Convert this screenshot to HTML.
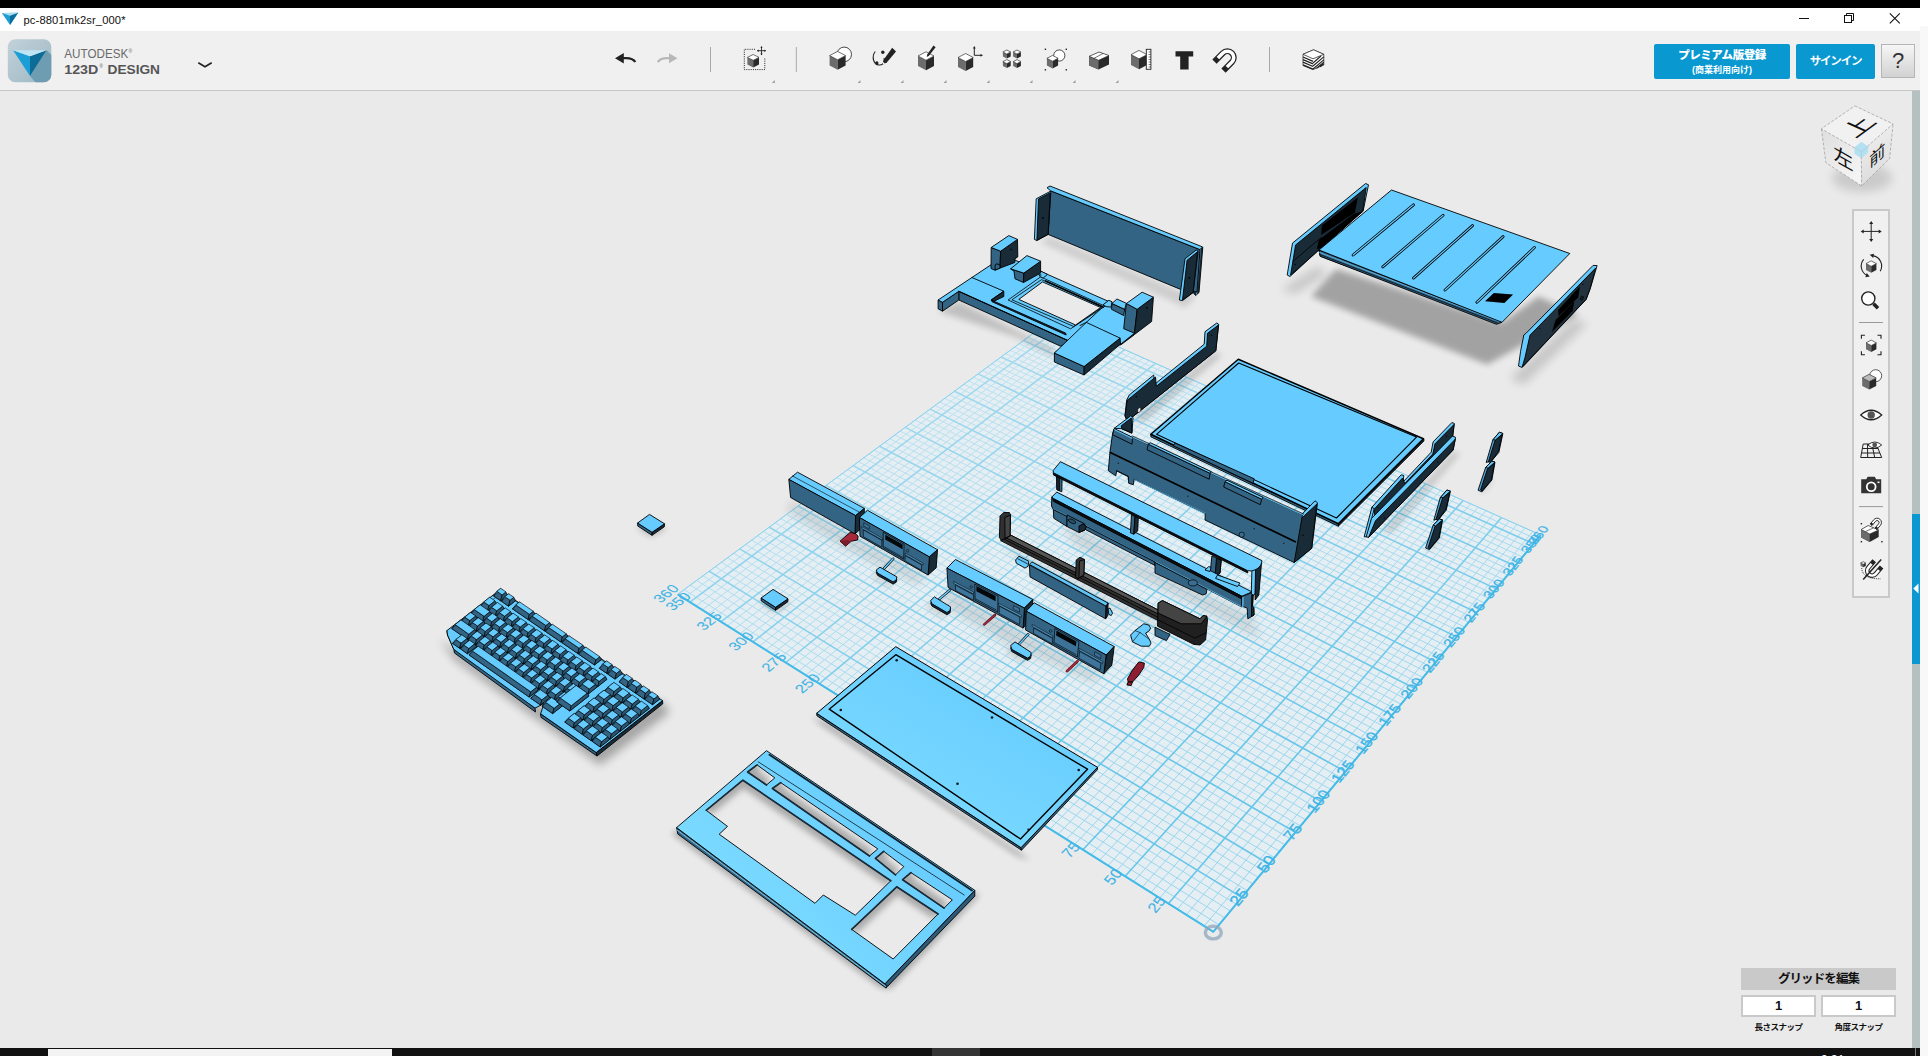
<!DOCTYPE html>
<html lang="ja"><head><meta charset="utf-8"><title>pc-8801mk2sr_000*</title>
<style>
html,body{margin:0;padding:0;overflow:hidden;}
body{width:1928px;height:1056px;overflow:hidden;position:relative;background:#eaeaea;font-family:"Liberation Sans","Noto Sans CJK JP",sans-serif;}
.abs{position:absolute;}
#topblack{left:0;top:0;width:1920px;height:8px;background:#000;}
#rstrip{left:1920px;top:0;width:8px;height:1056px;background:#f8f8f8;}
#rstrip i{display:block;height:26px;background:#fff;}
#titlebar{left:0;top:8px;width:1920px;height:23px;background:#fff;}
#title{left:23.5px;top:5.5px;font-size:11.2px;color:#111;letter-spacing:0.12px;white-space:nowrap;}
#toolbar{left:0;top:31px;width:1920px;height:59px;background:#f0f0f0;border-bottom:1px solid #c6c6c6;}
#canvas{left:0;top:91px;width:1912px;height:957px;background:#eaeaea;}
#vstrip{left:1912px;top:91px;width:8px;height:957px;background:#b5c0c0;}
#vblue{left:1912px;top:514px;width:8px;height:150px;background:#0a97d2;}
#taskbar{left:0;top:1048px;width:1920px;height:8px;background:#111;}
#search{left:48px;top:1049px;width:344px;height:7px;background:#f3f3f3;}
#tbsel{left:932px;top:1048px;width:48px;height:8px;background:#343434;}
.btn{background:#0a98d0;color:#fff;border-radius:2px;text-align:center;font-weight:bold;}
#premium{left:1654px;top:44px;width:136px;height:35px;}
#premium b{display:block;font-size:11.5px;line-height:14px;margin-top:3.5px;letter-spacing:-0.45px;}
#premium span{display:block;font-size:9px;line-height:12px;font-weight:bold;margin-top:2px;}
#signin{left:1796px;top:44px;width:79px;height:35px;font-size:11.5px;line-height:35px;letter-spacing:-1.2px;}
#help{left:1881px;top:44px;width:32px;height:32px;border:1px solid #b5b5b5;background:linear-gradient(#f6f6f6,#d2d2d2);font-size:22px;line-height:32px;text-align:center;color:#333;}
#navbar{left:1852px;top:209px;width:34px;height:385px;border:2px solid #c9c9c9;background:#f0f0f0;}
#gridedit{left:1741px;top:968px;width:155px;height:22px;background:#c9c9c9;letter-spacing:-0.9px;font-size:12.5px;font-weight:bold;line-height:22px;text-align:center;color:#111;}
.snapbox{top:995px;width:71px;height:18px;border:2px solid #c9c9c9;background:#fff;font-size:13px;font-weight:bold;line-height:18px;text-align:center;color:#111;}
.snaplbl{top:1022px;width:75px;letter-spacing:-0.5px;font-size:8.5px;font-weight:bold;text-align:center;color:#111;line-height:11px;white-space:nowrap;}
svg{position:absolute;left:0;top:0;}
</style></head><body>
<div id="canvas" class="abs"></div>
<svg id="scene" width="1928" height="1056" viewBox="0 0 1928 1056">
<defs>
<filter id="blur3" x="-20%" y="-20%" width="140%" height="140%"><feGaussianBlur stdDeviation="3"/></filter>
<filter id="blur5" x="-20%" y="-20%" width="140%" height="140%"><feGaussianBlur stdDeviation="5"/></filter>
<filter id="blur8" x="-20%" y="-20%" width="140%" height="140%"><feGaussianBlur stdDeviation="8"/></filter>
</defs>
<polygon points="1213.3,931.8 1540.7,535.0 1054.0,318.2 677.7,594.4" fill="#e5eef2"/>
<path d="M1219.1,924.8 L684.1,589.7 M1204.2,926.1 L1532.8,531.5 M1224.8,917.9 L690.4,585.1 M1195.2,920.4 L1524.9,528.0 M1230.5,911.0 L696.7,580.5 M1186.3,914.8 L1517.0,524.5 M1236.1,904.2 L703.0,575.9 M1177.4,909.2 L1509.2,521.0 M1247.3,890.7 L715.4,566.8 M1159.7,898.0 L1493.7,514.1 M1252.8,884.0 L721.5,562.3 M1151.0,892.5 L1486.0,510.6 M1258.2,877.3 L727.6,557.8 M1142.3,887.1 L1478.4,507.2 M1263.7,870.8 L733.7,553.3 M1133.7,881.6 L1470.7,503.8 M1274.4,857.7 L745.7,544.5 M1116.5,870.8 L1455.6,497.1 M1279.7,851.3 L751.7,540.1 M1108.1,865.5 L1448.1,493.7 M1285.0,844.9 L757.6,535.8 M1099.6,860.2 L1440.6,490.4 M1290.2,838.6 L763.5,531.4 M1091.3,854.9 L1433.2,487.1 M1300.6,826.0 L775.1,522.9 M1074.6,844.5 L1418.4,480.5 M1305.7,819.8 L780.9,518.6 M1066.4,839.3 L1411.0,477.2 M1310.8,813.6 L786.7,514.4 M1058.2,834.1 L1403.7,474.0 M1315.9,807.5 L792.4,510.2 M1050.1,829.0 L1396.5,470.7 M1325.9,795.4 L803.7,501.9 M1033.9,818.8 L1382.0,464.3 M1330.8,789.4 L809.3,497.8 M1026.0,813.8 L1374.8,461.1 M1335.7,783.4 L814.9,493.7 M1018.0,808.8 L1367.7,457.9 M1340.6,777.5 L820.5,489.6 M1010.1,803.8 L1360.6,454.8 M1350.3,765.8 L831.5,481.5 M994.4,793.9 L1346.5,448.5 M1355.1,760.0 L837.0,477.5 M986.7,789.0 L1339.5,445.4 M1359.8,754.2 L842.4,473.5 M978.9,784.2 L1332.5,442.2 M1364.5,748.5 L847.8,469.6 M971.2,779.3 L1325.5,439.2 M1373.8,737.2 L858.5,461.7 M956.0,769.7 L1311.7,433.0 M1378.5,731.6 L863.8,457.8 M948.5,765.0 L1304.9,430.0 M1383.1,726.1 L869.1,453.9 M941.0,760.2 L1298.1,426.9 M1387.6,720.5 L874.3,450.1 M933.5,755.5 L1291.3,423.9 M1396.6,709.6 L884.7,442.4 M918.7,746.2 L1277.8,417.9 M1401.1,704.2 L889.9,438.7 M911.3,741.6 L1271.1,414.9 M1405.5,698.8 L895.0,434.9 M904.0,737.0 L1264.4,411.9 M1409.9,693.5 L900.1,431.1 M896.8,732.4 L1257.8,409.0 M1418.7,682.9 L910.2,423.7 M882.4,723.3 L1244.6,403.1 M1423.0,677.6 L915.3,420.0 M875.2,718.8 L1238.0,400.2 M1427.3,672.4 L920.2,416.4 M868.1,714.3 L1231.5,397.3 M1431.6,667.3 L925.2,412.7 M861.0,709.9 L1225.0,394.4 M1440.0,657.0 L935.1,405.5 M847.0,701.1 L1212.1,388.6 M1444.2,652.0 L939.9,401.9 M840.1,696.7 L1205.7,385.8 M1448.4,646.9 L944.8,398.4 M833.2,692.3 L1199.3,382.9 M1452.5,641.9 L949.6,394.8 M826.3,688.0 L1192.9,380.1 M1460.7,632.0 L959.2,387.8 M812.6,679.4 L1180.3,374.5 M1464.7,627.1 L964.0,384.3 M805.9,675.1 L1174.0,371.7 M1468.7,622.2 L968.7,380.8 M799.1,670.9 L1167.8,368.9 M1472.7,617.4 L973.4,377.4 M792.4,666.7 L1161.6,366.1 M1480.7,607.8 L982.7,370.5 M779.2,658.3 L1149.2,360.6 M1484.6,603.0 L987.4,367.1 M772.6,654.2 L1143.1,357.9 M1488.5,598.3 L992.0,363.7 M766.0,650.0 L1136.9,355.1 M1492.4,593.6 L996.6,360.4 M759.5,645.9 L1130.9,352.4 M1500.1,584.2 L1005.6,353.7 M746.5,637.8 L1118.8,347.0 M1503.9,579.6 L1010.2,350.4 M740.1,633.7 L1112.7,344.4 M1507.7,575.0 L1014.6,347.1 M733.7,629.7 L1106.8,341.7 M1511.4,570.5 L1019.1,343.8 M727.4,625.7 L1100.8,339.0 M1518.9,561.5 L1028.0,337.3 M714.8,617.8 L1089.0,333.8 M1522.6,557.0 L1032.4,334.1 M708.5,613.8 L1083.1,331.1 M1526.2,552.5 L1036.7,330.9 M702.3,609.9 L1077.2,328.5 M1529.9,548.1 L1041.1,327.7 M696.1,606.0 L1071.4,325.9 M1537.1,539.3 L1049.7,321.3 M683.8,598.2 L1059.8,320.8 M1540.7,535.0 L1054.0,318.2 M677.7,594.4 L1054.0,318.2" stroke="#96d5ee" stroke-width="0.95" fill="none"/>
<path d="M1213.3,931.8 L677.7,594.4 M1213.3,931.8 L1540.7,535.0 M1241.7,897.4 L709.2,571.3 M1168.5,903.6 L1501.5,517.5 M1269.1,864.2 L739.7,548.9 M1125.1,876.2 L1463.2,500.5 M1295.4,832.3 L769.3,527.2 M1082.9,849.7 L1425.8,483.8 M1320.9,801.4 L798.1,506.0 M1042.0,823.9 L1389.2,467.5 M1345.5,771.6 L826.0,485.5 M1002.2,798.8 L1353.5,451.6 M1369.2,742.9 L853.2,465.6 M963.6,774.5 L1318.6,436.1 M1392.1,715.1 L879.5,446.3 M926.1,750.9 L1284.5,420.9 M1414.3,688.2 L905.2,427.4 M889.5,727.8 L1251.1,406.0 M1435.8,662.1 L930.1,409.1 M854.0,705.5 L1218.5,391.5 M1456.6,636.9 L954.4,391.3 M819.4,683.7 L1186.6,377.3 M1476.7,612.5 L978.1,373.9 M785.8,662.5 L1155.4,363.4 M1496.2,588.9 L1001.1,357.0 M753.0,641.8 L1124.8,349.7 M1515.2,566.0 L1023.5,340.6 M721.1,621.7 L1094.9,336.4 M1533.5,543.7 L1045.4,324.5 M689.9,602.1 L1065.6,323.3" stroke="#66c6ea" stroke-width="1.6" fill="none"/>
<linearGradient id="gfade" gradientUnits="userSpaceOnUse" x1="1213" y1="932" x2="1054" y2="318"><stop offset="0.25" stop-color="#e5eef2" stop-opacity="0"/><stop offset="1" stop-color="#e5eef2" stop-opacity="0.5"/></linearGradient>
<polygon points="1213.3,931.8 1540.7,535.0 1054.0,318.2 677.7,594.4" fill="url(#gfade)"/>
<path d="M677.7,594.4 L1054.0,318.2 L1540.7,535.0" fill="none" stroke="#8ed3ee" stroke-width="1.0"/>
<path d="M677.7,594.4 L1213.3,931.8 L1540.7,535.0" fill="none" stroke="#45bbe8" stroke-width="1.9"/><g font-family="Liberation Sans, sans-serif" font-size="13.5" fill="#3fb4e6" stroke="#3fb4e6" stroke-width="0.3"><text transform="matrix(0.744,-0.863,0.964,0.608,1160.9,912.5)" text-anchor="middle" x="4" y="-3" stroke-width="0.1">25</text>
<text transform="matrix(0.758,-0.842,0.959,0.604,1117.3,884.8)" text-anchor="middle" x="4" y="-3" stroke-width="0.1">50</text>
<text transform="matrix(0.771,-0.822,0.953,0.601,1075.1,858.0)" text-anchor="middle" x="4" y="-3" stroke-width="0.1">75</text>
<text transform="matrix(0.782,-0.803,0.948,0.597,1034.1,832.0)" text-anchor="middle" x="4" y="-3" stroke-width="0.1">100</text>
<text transform="matrix(0.793,-0.784,0.944,0.594,994.3,806.7)" text-anchor="middle" x="4" y="-3" stroke-width="0.1">125</text>
<text transform="matrix(0.803,-0.766,0.939,0.591,955.6,782.2)" text-anchor="middle" x="4" y="-3" stroke-width="0.1">150</text>
<text transform="matrix(0.812,-0.748,0.934,0.589,918.0,758.3)" text-anchor="middle" x="4" y="-3" stroke-width="0.1">175</text>
<text transform="matrix(0.821,-0.731,0.930,0.586,881.4,735.1)" text-anchor="middle" x="4" y="-3" stroke-width="0.1">200</text>
<text transform="matrix(0.829,-0.714,0.926,0.583,845.8,712.5)" text-anchor="middle" x="4" y="-3" stroke-width="0.1">225</text>
<text transform="matrix(0.837,-0.698,0.922,0.581,811.2,690.6)" text-anchor="middle" x="4" y="-3" stroke-width="0.1">250</text>
<text transform="matrix(0.844,-0.683,0.918,0.578,777.5,669.2)" text-anchor="middle" x="4" y="-3" stroke-width="0.1">275</text>
<text transform="matrix(0.850,-0.668,0.914,0.576,744.7,648.3)" text-anchor="middle" x="4" y="-3" stroke-width="0.1">300</text>
<text transform="matrix(0.856,-0.653,0.911,0.574,712.7,628.1)" text-anchor="middle" x="4" y="-3" stroke-width="0.1">325</text>
<text transform="matrix(0.861,-0.639,0.907,0.572,681.6,608.3)" text-anchor="middle" x="4" y="-3" stroke-width="0.1">350</text>
<text transform="matrix(0.863,-0.634,0.906,0.571,669.4,600.5)" text-anchor="middle" x="4" y="-3" stroke-width="0.1">360</text>
<text transform="matrix(0.769,-0.933,1.031,0.631,1242.6,897.9)" text-anchor="middle" x="-1" y="1.8">25</text>
<text transform="matrix(0.755,-0.916,1.020,0.607,1270.0,864.8)" text-anchor="middle" x="-1" y="1.8">50</text>
<text transform="matrix(0.742,-0.899,1.008,0.585,1296.3,832.8)" text-anchor="middle" x="-1" y="1.8">75</text>
<text transform="matrix(0.729,-0.883,0.997,0.563,1321.8,801.9)" text-anchor="middle" x="-1" y="1.8">100</text>
<text transform="matrix(0.716,-0.868,0.986,0.543,1346.3,772.1)" text-anchor="middle" x="-1" y="1.8">125</text>
<text transform="matrix(0.704,-0.853,0.975,0.524,1370.1,743.3)" text-anchor="middle" x="-1" y="1.8">150</text>
<text transform="matrix(0.692,-0.839,0.963,0.505,1393.0,715.5)" text-anchor="middle" x="-1" y="1.8">175</text>
<text transform="matrix(0.681,-0.825,0.952,0.488,1415.2,688.6)" text-anchor="middle" x="-1" y="1.8">200</text>
<text transform="matrix(0.670,-0.812,0.941,0.471,1436.6,662.6)" text-anchor="middle" x="-1" y="1.8">225</text>
<text transform="matrix(0.659,-0.799,0.930,0.455,1457.4,637.3)" text-anchor="middle" x="-1" y="1.8">250</text>
<text transform="matrix(0.649,-0.786,0.920,0.440,1477.5,612.9)" text-anchor="middle" x="-1" y="1.8">275</text>
<text transform="matrix(0.639,-0.774,0.909,0.426,1497.0,589.3)" text-anchor="middle" x="-1" y="1.8">300</text>
<text transform="matrix(0.629,-0.763,0.899,0.412,1516.0,566.3)" text-anchor="middle" x="-1" y="1.8">325</text>
<text transform="matrix(0.620,-0.751,0.888,0.399,1534.3,544.1)" text-anchor="middle" x="-1" y="1.8">350</text>
<text transform="matrix(0.616,-0.747,0.884,0.394,1541.5,535.4)" text-anchor="middle" x="-1" y="1.8">360</text>
<ellipse cx="1213.3" cy="932.6" rx="8" ry="6.3" fill="none" stroke="#8fa6bb" stroke-opacity="0.75" stroke-width="3.4"/></g>
<polygon points="1040.0,242.0 1050.0,237.0 1182.0,292.0 1196.0,296.0 1185.0,308.0 1170.0,300.0" fill="#000" opacity="0.12" filter="url(#blur3)"/>
<polygon points="1198.1,251.0 1202.8,247.2 1199.0,292.5 1195.6,295.6 1193.1,292.5" fill="#1a2b38" stroke="#000" stroke-width="0.9" stroke-linejoin="round" />
<polyline points="1200.4,249.4 1196.5,294.0" fill="none" stroke="#4a90bd" stroke-width="1.2" stroke-linejoin="round" stroke-linecap="round" />
<polygon points="1050.6,190.8 1200.0,249.6 1197.0,292.0 1180.6,289.4 1048.1,234.4" fill="#346484" stroke="#000" stroke-width="0.9" stroke-linejoin="round" />
<polygon points="1047.0,187.7 1050.0,186.0 1202.5,246.9 1200.0,249.6 1050.6,190.8" fill="#66ccff" stroke="#000" stroke-width="0.9" stroke-linejoin="round" />
<polygon points="1036.2,198.8 1050.0,191.5 1050.8,192.5 1048.1,234.4 1036.9,240.6 1034.4,239.4" fill="#66ccff" stroke="#000" stroke-width="0.9" stroke-linejoin="round" />
<polygon points="1038.5,199.0 1050.2,192.8 1048.1,234.4 1036.9,240.2" fill="#1a2b38" stroke="#000" stroke-width="0.9" stroke-linejoin="round" />
<circle cx="1043.1" cy="217.9" r="0.9" fill="#000"/>
<polygon points="1185.0,258.8 1196.2,250.0 1198.1,251.2 1193.1,292.5 1182.5,300.6 1179.4,300.0" fill="#66ccff" stroke="#000" stroke-width="0.9" stroke-linejoin="round" />
<polygon points="1187.1,260.2 1197.5,251.8 1193.1,292.5 1182.5,300.0" fill="#1a2b38" stroke="#000" stroke-width="0.9" stroke-linejoin="round" />
<circle cx="1189.4" cy="277.8" r="0.9" fill="#000"/>
<polygon points="937.5,311.2 958.8,301.2 1055.0,350.0 1055.0,357.0 1017.5,337.5" fill="#000" opacity="0.18" filter="url(#blur3)"/>
<polygon points="958.8,291.3 1069.7,341.3 1060.7,346.2 958.8,300.0" fill="#346484" stroke="#000" stroke-width="0.9" stroke-linejoin="round" />
<polygon points="938.1,300.0 942.5,302.2 942.5,311.2 938.1,308.8" fill="#346484" stroke="#000" stroke-width="0.9" stroke-linejoin="round" />
<polygon points="942.5,302.2 958.8,291.2 958.8,300.0 942.5,311.2" fill="#346484" stroke="#000" stroke-width="0.9" stroke-linejoin="round" />
<polygon points="1120.1,338.1 1134.0,333.6 1134.0,335.0 1120.5,345.1" fill="#1a2b38" stroke="#000" stroke-width="0.9" stroke-linejoin="round" />
<polygon points="938.1,300.0 971.9,277.5 1004.8,255.6 1047.5,274.4 1108.8,301.5 1150.9,320.1 1134.0,333.6 1121.0,344.0 1084.0,366.5 1054.4,353.0 1069.7,341.3 958.8,291.3 942.5,302.3" fill="#66ccff" stroke="#000" stroke-width="0.9" stroke-linejoin="round" />
<polygon points="1008.1,300.0 1040.6,276.9 1105.0,306.2 1070.6,328.8" fill="none" stroke="#000" stroke-width="0.8" stroke-linejoin="round" />
<polygon points="1011.9,299.8 1041.6,279.6 1102.2,306.9 1073.8,326.5" fill="none" stroke="#000" stroke-width="0.8" stroke-linejoin="round" />
<polygon points="1018.8,299.4 1042.5,281.9 1100.6,307.5 1075.6,325.0" fill="#eaeaea" stroke="#000" stroke-width="0.9" stroke-linejoin="round" />
<polyline points="1045.6,280.9 1103.1,307.1" fill="none" stroke="#000" stroke-width="1.6" stroke-linejoin="round" stroke-linecap="round" />
<polygon points="1003.8,291.2 1003.8,296.5 992.5,301.9 991.2,300.0" fill="#1a2b38" stroke="#000" stroke-width="0.9" stroke-linejoin="round" />
<polygon points="991.2,300.0 1065.6,333.1 1066.2,335.0 992.5,301.9" fill="#1a2b38" stroke="#000" stroke-width="0.9" stroke-linejoin="round" />
<polyline points="971.9,277.5 1003.8,291.2 991.2,300.0" fill="none" stroke="#000" stroke-width="0.9" stroke-linejoin="round" stroke-linecap="round" />
<polyline points="958.8,291.2 1069.4,341.2" fill="none" stroke="#000" stroke-width="0.9" stroke-linejoin="round" stroke-linecap="round" />
<polygon points="1038.5,272.5 1040.6,271.0 1047.5,274.4 1043.1,278.1 1039.8,276.5" fill="#66ccff" stroke="#000" stroke-width="0.9" stroke-linejoin="round" />
<circle cx="1040.8" cy="275.0" r="0.7" fill="#000"/>
<polygon points="991.2,247.5 1000.6,251.2 1000.0,268.1 995.0,270.2 991.0,268.5" fill="#346484" stroke="#000" stroke-width="0.9" stroke-linejoin="round" />
<polygon points="1000.6,251.2 1017.5,239.4 1017.8,256.9 1015.0,258.8 1014.8,262.5 1000.0,268.1" fill="#1a2b38" stroke="#000" stroke-width="0.9" stroke-linejoin="round" />
<polygon points="991.2,247.5 1008.8,235.6 1017.5,239.4 1000.6,251.2" fill="#66ccff" stroke="#000" stroke-width="0.9" stroke-linejoin="round" />
<polygon points="996.9,263.8 1000.0,265.0 1000.0,268.1 995.0,270.2 995.2,264.8" fill="#346484" stroke="#000" stroke-width="0.9" stroke-linejoin="round" />
<circle cx="1011.0" cy="249.6" r="0.8" fill="#000"/>
<polygon points="1010.6,268.8 1023.8,273.1 1023.5,282.5 1015.0,278.8 1014.0,271.2" fill="#346484" stroke="#000" stroke-width="0.9" stroke-linejoin="round" />
<polygon points="1023.8,273.1 1040.6,261.2 1040.6,273.1 1023.5,282.5" fill="#1a2b38" stroke="#000" stroke-width="0.9" stroke-linejoin="round" />
<polygon points="1010.6,268.8 1026.9,255.6 1040.6,261.2 1023.8,273.1" fill="#66ccff" stroke="#000" stroke-width="0.9" stroke-linejoin="round" />
<polygon points="1103.0,304.8 1108.8,300.3 1112.0,301.7 1111.1,307.1 1106.1,306.6" fill="#66ccff" stroke="#000" stroke-width="0.9" stroke-linejoin="round" />
<polygon points="1112.0,303.5 1124.6,309.3 1123.7,315.6 1111.5,309.3" fill="#346484" stroke="#000" stroke-width="0.9" stroke-linejoin="round" />
<polygon points="1112.0,303.5 1116.9,299.0 1126.4,303.3 1124.6,309.3" fill="#66ccff" stroke="#000" stroke-width="0.9" stroke-linejoin="round" />
<polygon points="1126.4,303.5 1137.2,309.3 1134.5,333.2 1123.7,328.7" fill="#346484" stroke="#000" stroke-width="0.9" stroke-linejoin="round" />
<polygon points="1137.2,309.3 1153.4,297.2 1151.6,321.5 1134.5,334.5 1134.5,333.2" fill="#1a2b38" stroke="#000" stroke-width="0.9" stroke-linejoin="round" />
<polygon points="1126.4,303.5 1142.1,292.2 1153.4,297.2 1137.2,309.3" fill="#66ccff" stroke="#000" stroke-width="0.9" stroke-linejoin="round" />
<circle cx="1146.9" cy="307.8" r="0.9" fill="#000"/>
<polygon points="1054.4,353.0 1084.1,366.5 1084.1,375.0 1054.4,362.0" fill="#346484" stroke="#000" stroke-width="0.9" stroke-linejoin="round" />
<polygon points="1084.1,366.5 1120.1,338.1 1120.5,344.0 1084.1,375.0" fill="#1a2b38" stroke="#000" stroke-width="0.9" stroke-linejoin="round" />
<polygon points="1054.4,353.0 1086.3,322.4 1120.1,338.1 1084.1,366.5" fill="#66ccff" stroke="#000" stroke-width="0.9" stroke-linejoin="round" />
<polyline points="1086.3,322.4 1101.2,308.4" fill="none" stroke="#000" stroke-width="0.9" stroke-linejoin="round" stroke-linecap="round" />
<polyline points="1086.3,322.4 1080.0,325.5" fill="none" stroke="#000" stroke-width="0.9" stroke-linejoin="round" stroke-linecap="round" />
<polygon points="1311.1,296.4 1336.1,269.1 1502.0,322.5 1538.4,296.4 1578.2,314.5 1487.3,364.5" fill="#000" opacity="0.3" filter="url(#blur3)"/>
<polygon points="1281.6,289.5 1316.8,266.8 1328.2,273.6 1294.1,294.1" fill="#000" opacity="0.15" filter="url(#blur5)"/>
<polygon points="1510.0,378.2 1573.6,319.1 1587.3,323.6 1523.6,385.0" fill="#000" opacity="0.15" filter="url(#blur5)"/>
<polygon points="1292.5,243.1 1365.6,183.5 1368.5,184.8 1363.1,211.2 1317.5,251.2 1290.0,276.5 1287.2,275.0" fill="#66ccff" stroke="#000" stroke-width="0.9" stroke-linejoin="round" />
<polygon points="1295.6,245.0 1366.2,187.5 1362.8,211.0 1290.6,275.0" fill="#1a2b38" stroke="#000" stroke-width="0.9" stroke-linejoin="round" />
<polygon points="1321.9,225.6 1357.8,197.5 1355.0,212.5 1321.2,235.0" fill="#000" stroke="none" stroke-width="0" stroke-linejoin="round" />
<polygon points="1318.8,240.0 1353.8,213.8 1362.5,211.2 1320.0,250.0 1316.9,248.8" fill="#000" stroke="none" stroke-width="0" stroke-linejoin="round" />
<polyline points="1293.1,261.2 1321.2,237.5" fill="none" stroke="#000" stroke-width="0.8" stroke-linejoin="round" stroke-linecap="round" />
<circle cx="1295.2" cy="264.4" r="0.7" fill="#000"/>
<circle cx="1356.0" cy="215.0" r="0.7" fill="#000"/>
<polygon points="1319.0,250.0 1320.2,256.2 1465.0,310.6 1467.5,305.0" fill="#346484" stroke="#000" stroke-width="0.9" stroke-linejoin="round" />
<polygon points="1319.0,250.0 1320.3,256.3 1496.5,324.3 1502.0,322.3" fill="#346484" stroke="#000" stroke-width="0.9" stroke-linejoin="round" />
<polyline points="1319.6,252.5 1499.0,321.5" fill="none" stroke="#5fb8e8" stroke-width="0.9" stroke-linejoin="round" stroke-linecap="round" />
<polyline points="1320.0,254.6 1497.5,323.0" fill="none" stroke="#000" stroke-width="0.7" stroke-linejoin="round" stroke-linecap="round" />
<polygon points="1391.5,190.0 1569.8,253.5 1502.0,322.3 1319.0,250.0" fill="#66ccff" stroke="#000" stroke-width="0.9" stroke-linejoin="round" />
<polyline points="1353.1,255.0 1413.5,204.8" fill="none" stroke="#000" stroke-width="2.8" stroke-linejoin="round" stroke-linecap="round" />
<polyline points="1353.1,255.0 1413.5,204.8" fill="none" stroke="#66ccff" stroke-width="1.2" stroke-linejoin="round" stroke-linecap="round" />
<polyline points="1382.8,266.9 1443.1,215.3" fill="none" stroke="#000" stroke-width="2.8" stroke-linejoin="round" stroke-linecap="round" />
<polyline points="1382.8,266.9 1443.1,215.3" fill="none" stroke="#66ccff" stroke-width="1.2" stroke-linejoin="round" stroke-linecap="round" />
<polyline points="1413.5,278.1 1472.5,225.6" fill="none" stroke="#000" stroke-width="2.8" stroke-linejoin="round" stroke-linecap="round" />
<polyline points="1413.5,278.1 1472.5,225.6" fill="none" stroke="#66ccff" stroke-width="1.2" stroke-linejoin="round" stroke-linecap="round" />
<polyline points="1445.0,290.0 1503.1,236.6" fill="none" stroke="#000" stroke-width="2.8" stroke-linejoin="round" stroke-linecap="round" />
<polyline points="1445.0,290.0 1503.1,236.6" fill="none" stroke="#66ccff" stroke-width="1.2" stroke-linejoin="round" stroke-linecap="round" />
<polyline points="1476.9,302.2 1534.4,247.5" fill="none" stroke="#000" stroke-width="2.8" stroke-linejoin="round" stroke-linecap="round" />
<polyline points="1476.9,302.2 1534.4,247.5" fill="none" stroke="#66ccff" stroke-width="1.2" stroke-linejoin="round" stroke-linecap="round" />
<polygon points="1485.0,301.3 1493.8,293.1 1513.1,294.4 1504.4,303.1" fill="#000" stroke="none" stroke-width="0" stroke-linejoin="round" />
<polygon points="1526.2,333.1 1593.1,265.4 1597.1,265.6 1590.2,288.8 1586.2,299.4 1522.2,367.5 1518.5,366.0 1520.6,351.2 1523.8,335.0" fill="#66ccff" stroke="#000" stroke-width="0.9" stroke-linejoin="round" />
<polygon points="1530.0,335.2 1595.6,268.1 1590.0,288.8 1586.0,299.4 1522.2,366.9 1525.0,357.5" fill="#22333f" stroke="#000" stroke-width="0.9" stroke-linejoin="round" />
<polygon points="1558.1,310.0 1580.0,286.2 1578.1,297.5 1558.5,316.2" fill="#000" stroke="none" stroke-width="0" stroke-linejoin="round" />
<polygon points="1555.6,320.0 1574.4,301.2 1572.5,311.2 1551.9,331.9" fill="#000" stroke="none" stroke-width="0" stroke-linejoin="round" />
<ellipse cx="1581.9" cy="298.1" rx="1.4" ry="2.2" fill="#121c24" stroke="#000" stroke-width="0.5" transform="rotate(25 1581.9 298.1)"/>
<circle cx="1582.8" cy="284.4" r="0.6" fill="#000"/>
<circle cx="1539.8" cy="328.5" r="0.6" fill="#000"/>
<polygon points="1133.3,418.3 1215.0,352.5 1221.7,355.0 1143.3,421.7" fill="#000" opacity="0.18" filter="url(#blur3)"/>
<polygon points="1129.2,395.0 1153.7,375.0 1154.7,384.2 1204.2,344.2 1205.0,331.7 1216.7,323.0 1218.7,324.3 1215.8,350.8 1131.7,417.5 1131.7,431.7 1125.0,415.8 1126.7,400.0" fill="#66ccff" stroke="#000" stroke-width="0.9" stroke-linejoin="round" />
<polygon points="1131.3,397.0 1155.5,377.0 1156.3,386.3 1206.7,346.2 1207.5,333.3 1218.5,325.0 1215.8,350.8 1131.7,417.5 1131.7,431.7 1125.0,415.8 1127.2,400.3" fill="#1a2b38" stroke="#000" stroke-width="0.9" stroke-linejoin="round" />
<circle cx="1136.3" cy="396.7" r="0.7" fill="#000"/>
<circle cx="1211.3" cy="335.3" r="0.7" fill="#000"/>
<ellipse cx="1139.2" cy="410.0" rx="1.5" ry="2.5" fill="#e6ecef" stroke="#000" stroke-width="0.6" transform="rotate(20 1139.2 410.0)"/>
<polygon points="1150.8,434.2 1338.3,523.7 1338.3,526.2 1150.8,436.8" fill="#346484" stroke="#000" stroke-width="0.9" stroke-linejoin="round" />
<polygon points="1338.3,523.7 1423.9,438.8 1423.9,441.0 1338.3,526.2" fill="#1a2b38" stroke="#000" stroke-width="0.9" stroke-linejoin="round" />
<polygon points="1150.8,434.2 1238.3,359.2 1423.4,438.8 1338.3,523.7" fill="#66ccff" stroke="#000" stroke-width="1.5" stroke-linejoin="round" />
<polygon points="1156.5,434.3 1238.7,363.0 1416.5,437.1 1336.5,518.0" fill="#66ccff" stroke="#000" stroke-width="1.1" stroke-linejoin="round" />
<polygon points="1175.0,443.0 1254.2,478.8 1253.0,483.3 1173.3,445.8" fill="#346484" stroke="#000" stroke-width="0.9" stroke-linejoin="round" />
<polygon points="1114.2,428.3 1130.8,415.8 1133.0,417.5 1132.0,433.3 1121.7,428.7" fill="#66ccff" stroke="#000" stroke-width="0.9" stroke-linejoin="round" />
<polygon points="1121.3,425.8 1131.3,418.0 1131.7,433.0 1121.7,428.7" fill="#1a2b38" stroke="#000" stroke-width="0.9" stroke-linejoin="round" />
<polygon points="1302.5,513.7 1315.0,500.8 1317.5,502.8 1311.7,548.3 1294.2,562.5 1294.2,516.7" fill="#66ccff" stroke="#000" stroke-width="0.9" stroke-linejoin="round" />
<polygon points="1303.7,516.3 1316.7,504.2 1311.7,548.3 1294.2,562.5 1294.7,525.0" fill="#1a2b38" stroke="#000" stroke-width="0.9" stroke-linejoin="round" />
<circle cx="1303.0" cy="535.3" r="0.7" fill="#000"/>
<polygon points="1112.5,434.2 1114.2,428.7 1132.5,437.5 1302.5,514.7 1294.2,562.5 1205.0,520.0 1205.3,513.3 1134.2,479.2 1133.3,484.7 1128.7,483.3 1128.3,476.7 1116.7,470.8 1115.8,475.8 1108.3,470.8 1110.0,451.7" fill="#346484" stroke="#000" stroke-width="0.9" stroke-linejoin="round" />
<polyline points="1132.5,437.0 1303.7,515.0" fill="none" stroke="#5db9ea" stroke-width="1.3" stroke-linejoin="round" stroke-linecap="round" />
<polyline points="1132.5,436.0 1303.7,514.0" fill="none" stroke="#000" stroke-width="0.7" stroke-linejoin="round" stroke-linecap="round" />
<polygon points="1114.2,428.7 1132.5,437.5 1132.0,444.2 1112.5,434.7" fill="#346484" stroke="#000" stroke-width="0.9" stroke-linejoin="round" />
<polyline points="1114.7,429.7 1132.0,438.3" fill="none" stroke="#5db9ea" stroke-width="1.2" stroke-linejoin="round" stroke-linecap="round" />
<polygon points="1148.3,444.2 1210.0,473.3 1209.2,479.2 1147.0,449.7" fill="#346484" stroke="#000" stroke-width="0.9" stroke-linejoin="round" />
<polygon points="1148.3,444.2 1150.3,442.7 1211.3,471.7 1210.0,473.3" fill="#66ccff" stroke="#000" stroke-width="0.9" stroke-linejoin="round" />
<polygon points="1225.0,481.7 1261.7,499.2 1260.3,504.7 1223.7,487.0" fill="#346484" stroke="#000" stroke-width="0.9" stroke-linejoin="round" />
<polygon points="1225.0,481.7 1227.0,480.2 1263.0,497.3 1261.7,499.2" fill="#66ccff" stroke="#000" stroke-width="0.9" stroke-linejoin="round" />
<polyline points="1110.3,452.5 1295.3,541.7" fill="none" stroke="#000" stroke-width="1.7" stroke-linejoin="round" stroke-linecap="round" />
<polyline points="1116.7,470.8 1128.3,476.3 1128.3,480.0" fill="none" stroke="#000" stroke-width="0.7" stroke-linejoin="round" stroke-linecap="round" />
<polyline points="1135.0,479.7 1205.3,513.0" fill="none" stroke="#4f95c2" stroke-width="1.0" stroke-linejoin="round" stroke-linecap="round" />
<circle cx="1118.3" cy="463.3" r="0.8" fill="#16242e"/>
<circle cx="1187.8" cy="496.3" r="0.8" fill="#16242e"/>
<circle cx="1254.2" cy="528.7" r="0.8" fill="#16242e"/>
<circle cx="1283.8" cy="543.3" r="0.8" fill="#16242e"/>
<circle cx="1241.7" cy="534.7" r="2.6" fill="#3a6d90" stroke="#000" stroke-width="0.7"/>
<polygon points="1381.2,532.0 1453.1,451.2 1460.0,453.8 1392.5,532.0" fill="#000" opacity="0.15" filter="url(#blur3)"/>
<polygon points="1371.9,507.2 1401.2,474.8 1403.8,475.6 1403.1,481.9 1431.2,452.2 1433.1,441.9 1451.9,422.5 1454.4,423.5 1452.5,437.5 1375.6,520.6 1370.0,520.0" fill="#66ccff" stroke="#000" stroke-width="0.9" stroke-linejoin="round" />
<polygon points="1374.0,509.4 1402.5,478.1 1404.8,483.5 1432.8,454.0 1435.0,443.8 1454.0,424.5 1452.5,437.5 1375.6,520.6" fill="#1a2b38" stroke="#000" stroke-width="0.9" stroke-linejoin="round" />
<polygon points="1371.9,507.3 1374.2,508.6 1367.0,537.0 1364.2,536.7" fill="#66ccff" stroke="#000" stroke-width="0.9" stroke-linejoin="round" />
<circle cx="1446.6" cy="436.2" r="0.6" fill="#000"/>
<circle cx="1377.9" cy="507.5" r="0.6" fill="#000"/>
<polygon points="1371.5,518.5 1373.1,516.9 1452.5,436.0 1455.6,437.3 1453.1,450.0 1368.3,537.5 1366.3,536.5" fill="#66ccff" stroke="#000" stroke-width="0.9" stroke-linejoin="round" />
<polygon points="1375.5,520.8 1455.3,439.2 1453.1,450.0 1368.6,537.4" fill="#1a2b38" stroke="#000" stroke-width="0.9" stroke-linejoin="round" />
<circle cx="1437.9" cy="462.1" r="0.6" fill="#000"/>
<circle cx="1384.4" cy="518.1" r="0.6" fill="#000"/>
<polygon points="1478.8,491.2 1482.5,493.1 1493.8,480.0 1491.9,478.8" fill="#000" opacity="0.15" filter="url(#blur3)"/>
<polygon points="1492.8,440.0 1499.4,432.2 1502.9,433.5 1498.8,452.5 1491.9,460.6 1486.2,462.5" fill="#4fa3d6" stroke="#000" stroke-width="0.9" stroke-linejoin="round" />
<polygon points="1495.0,440.6 1502.2,434.5 1498.5,451.2 1490.6,462.5 1488.4,461.9" fill="#1a2b38" stroke="#000" stroke-width="0.9" stroke-linejoin="round" />
<polygon points="1492.8,440.0 1499.4,432.2 1502.9,433.5 1495.6,439.8" fill="#66ccff" stroke="#000" stroke-width="0.9" stroke-linejoin="round" />
<polygon points="1485.6,467.5 1491.9,461.2 1495.0,462.1 1491.9,480.0 1481.9,491.9 1478.1,490.2" fill="#4fa3d6" stroke="#000" stroke-width="0.9" stroke-linejoin="round" />
<polygon points="1487.5,468.8 1494.5,463.2 1491.2,480.0 1482.2,491.0 1480.6,490.0" fill="#1a2b38" stroke="#000" stroke-width="0.9" stroke-linejoin="round" />
<polygon points="1485.6,467.5 1491.9,461.2 1495.0,462.1 1488.1,468.1" fill="#66ccff" stroke="#000" stroke-width="0.9" stroke-linejoin="round" />
<polygon points="1426.2,549.0 1430.0,550.9 1441.2,537.8 1439.4,536.5" fill="#000" opacity="0.15" filter="url(#blur3)"/>
<polygon points="1440.2,497.8 1446.9,490.0 1450.4,491.2 1446.2,510.2 1439.4,518.4 1433.8,520.2" fill="#4fa3d6" stroke="#000" stroke-width="0.9" stroke-linejoin="round" />
<polygon points="1442.5,498.4 1449.8,492.2 1446.0,509.0 1438.1,520.2 1435.9,519.6" fill="#1a2b38" stroke="#000" stroke-width="0.9" stroke-linejoin="round" />
<polygon points="1440.2,497.8 1446.9,490.0 1450.4,491.2 1443.1,497.5" fill="#66ccff" stroke="#000" stroke-width="0.9" stroke-linejoin="round" />
<polygon points="1433.1,525.2 1439.4,519.0 1442.5,519.9 1439.4,537.8 1429.4,549.6 1425.6,548.0" fill="#4fa3d6" stroke="#000" stroke-width="0.9" stroke-linejoin="round" />
<polygon points="1435.0,526.5 1442.0,521.0 1438.8,537.8 1429.8,548.8 1428.1,547.8" fill="#1a2b38" stroke="#000" stroke-width="0.9" stroke-linejoin="round" />
<polygon points="1433.1,525.2 1439.4,519.0 1442.5,519.9 1435.6,525.9" fill="#66ccff" stroke="#000" stroke-width="0.9" stroke-linejoin="round" />
<polygon points="1060.0,520.0 1250.0,615.0 1262.0,640.0 1075.0,545.0" fill="#000" opacity="0.1" filter="url(#blur5)"/>
<polygon points="1056.7,475.8 1062.1,478.6 1061.8,491.8 1056.9,489.6" fill="#346484" stroke="#000" stroke-width="0.9" stroke-linejoin="round" />
<polygon points="1056.7,475.8 1059.3,477.2 1059.3,490.7 1056.9,489.6" fill="#1a2b38" stroke="#000" stroke-width="0.9" stroke-linejoin="round" />
<polygon points="1255.6,568.5 1261.5,563.1 1258.8,595.0 1255.2,600.0 1255.0,593.8" fill="#1a2b38" stroke="#000" stroke-width="0.9" stroke-linejoin="round" />
<polygon points="1251.9,570.2 1255.6,568.2 1255.0,594.0 1251.2,596.5" fill="#66ccff" stroke="#000" stroke-width="0.9" stroke-linejoin="round" />
<polygon points="1211.9,556.0 1221.2,560.2 1220.0,573.1 1215.0,576.5 1210.0,574.0" fill="#346484" stroke="#000" stroke-width="0.9" stroke-linejoin="round" />
<polygon points="1216.5,558.1 1221.2,560.2 1220.0,573.1 1215.0,576.5" fill="#1a2b38" stroke="#000" stroke-width="0.9" stroke-linejoin="round" />
<polygon points="1056.7,492.1 1251.9,591.9 1241.9,596.3 1053.5,498.7 1051.8,497.0" fill="#66ccff" stroke="#000" stroke-width="0.9" stroke-linejoin="round" />
<polygon points="1217.5,575.0 1240.0,583.1 1237.5,586.5 1215.6,578.4" fill="#66ccff" stroke="#000" stroke-width="0.9" stroke-linejoin="round" />
<polygon points="1205.0,570.0 1208.8,566.5 1211.0,567.5 1210.0,571.5" fill="#66ccff" stroke="#000" stroke-width="0.9" stroke-linejoin="round" />
<polygon points="1053.5,498.7 1241.9,596.3 1241.9,599.0 1053.5,501.4" fill="#0a1016" stroke="#000" stroke-width="0.9" stroke-linejoin="round" />
<polygon points="1051.8,497.0 1053.5,501.4 1241.9,599.0 1241.5,606.8 1053.3,509.6 1051.5,506.0" fill="#346484" stroke="#000" stroke-width="0.9" stroke-linejoin="round" />
<polyline points="1053.5,509.2 1241.5,606.4" fill="none" stroke="#5db9ea" stroke-width="0.9" stroke-linejoin="round" stroke-linecap="round" />
<polygon points="1053.3,509.6 1053.8,518.3 1067.0,526.5 1067.0,516.5" fill="#346484" stroke="#000" stroke-width="0.9" stroke-linejoin="round" />
<polygon points="1085.4,526.0 1155.0,562.0 1155.0,565.5 1085.4,529.5" fill="#346484" stroke="#000" stroke-width="0.9" stroke-linejoin="round" />
<polygon points="1067.0,515.0 1084.0,523.5 1086.0,527.0 1085.0,530.0 1079.0,532.5 1067.0,526.5" fill="#346484" stroke="#000" stroke-width="0.9" stroke-linejoin="round" />
<polygon points="1079.0,532.5 1085.0,530.0 1086.0,527.0 1084.0,523.5 1079.0,526.0" fill="#1a2b38" stroke="#000" stroke-width="0.9" stroke-linejoin="round" />
<ellipse cx="1072" cy="521.3" rx="4" ry="1.8" fill="#2a506b" stroke="#000" stroke-width="0.7" transform="rotate(27 1072 521.3)"/>
<polygon points="1155.0,562.5 1206.9,589.4 1206.2,593.8 1202.5,595.0 1155.0,573.1" fill="#346484" stroke="#000" stroke-width="0.9" stroke-linejoin="round" />
<ellipse cx="1192.8" cy="582.9" rx="4.5" ry="3" fill="#3a6d90" stroke="#000" stroke-width="0.7"/>
<polygon points="1241.9,596.5 1250.6,593.1 1253.1,595.0 1252.5,606.2 1253.8,607.5 1254.0,615.0 1247.8,618.8 1247.2,608.1 1241.9,606.2" fill="#346484" stroke="#000" stroke-width="0.9" stroke-linejoin="round" />
<polygon points="1251.8,595.0 1253.1,595.0 1252.5,606.2 1253.8,607.5 1254.0,615.0 1251.5,616.6 1251.5,607.5" fill="#1a2b38" stroke="#000" stroke-width="0.9" stroke-linejoin="round" />
<polyline points="1243.0,597.5 1242.8,606.2" fill="none" stroke="#5db9ea" stroke-width="1.4" stroke-linejoin="round" stroke-linecap="round" />
<polygon points="1131.5,514.6 1135.0,516.7 1133.8,534.2 1130.4,532.9" fill="#346484" stroke="#000" stroke-width="0.9" stroke-linejoin="round" />
<polygon points="1135.0,516.7 1138.3,518.2 1137.7,531.0 1133.8,534.2" fill="#1a2b38" stroke="#000" stroke-width="0.9" stroke-linejoin="round" />
<polygon points="1053.3,472.7 1247.5,570.6 1247.8,573.0 1053.4,475.0" fill="#0a1016" stroke="#000" stroke-width="0.9" stroke-linejoin="round" />
<path d="M1053.3,470.4 L1060.4,461.7 L1261.9,560.6 Q1262,566 1256,569.5 Q1251,572 1247.5,570.6 L1053.3,472.7 Z" fill="#66ccff" stroke="#000" stroke-width="0.9" stroke-linejoin="round"/>
<polygon points="1030.0,577.5 1105.6,619.4 1111.2,623.8 1037.5,585.0" fill="#000" opacity="0.1" filter="url(#blur3)"/>
<polygon points="1029.4,565.0 1106.2,606.2 1105.6,618.8 1030.0,576.9" fill="#346484" stroke="#000" stroke-width="0.9" stroke-linejoin="round" />
<polygon points="1029.4,564.4 1031.9,561.9 1108.1,603.1 1106.2,606.2" fill="#66ccff" stroke="#000" stroke-width="0.9" stroke-linejoin="round" />
<polygon points="1106.2,606.2 1108.1,603.1 1107.8,615.6 1105.6,618.8" fill="#1a2b38" stroke="#000" stroke-width="0.9" stroke-linejoin="round" />
<polygon points="1015.6,560.0 1018.8,556.2 1028.8,561.2 1028.1,566.2 1025.0,568.1 1016.2,563.1" fill="#66ccff" stroke="#000" stroke-width="0.9" stroke-linejoin="round" />
<polyline points="1017.8,558.8 1027.5,563.8" fill="none" stroke="#000" stroke-width="0.7" stroke-linejoin="round" stroke-linecap="round" />
<polygon points="1108.1,608.8 1110.0,608.1 1112.5,613.1 1111.2,615.6 1108.8,614.4" fill="#66ccff" stroke="#000" stroke-width="0.9" stroke-linejoin="round" />
<polygon points="1001.2,541.2 1157.5,621.9 1162.5,632.0 1010.0,552.5" fill="#000" opacity="0.1" filter="url(#blur5)"/>
<polygon points="1155.0,627.2 1170.0,634.4 1166.5,640.6 1155.0,635.6" fill="#346484" stroke="#000" stroke-width="0.9" stroke-linejoin="round" />
<polygon points="1010.0,534.8 1159.4,610.6 1158.1,620.6 1000.6,540.6" fill="#303030" stroke="#000" stroke-width="0.9" stroke-linejoin="round" />
<polygon points="1010.0,534.8 1159.4,610.6 1159.0,614.4 1005.6,537.5" fill="#555555" stroke="#000" stroke-width="0.9" stroke-linejoin="round" />
<polyline points="1003.8,539.0 1158.5,617.5" fill="none" stroke="#000" stroke-width="0.8" stroke-linejoin="round" stroke-linecap="round" />
<polygon points="1000.0,516.2 1003.8,512.5 1009.4,512.5 1010.6,515.0 1010.0,536.2 1001.2,540.2 999.4,537.5" fill="#303030" stroke="#000" stroke-width="0.9" stroke-linejoin="round" />
<polygon points="1004.8,517.5 1010.4,515.2 1010.0,536.0 1005.0,538.1" fill="#444444" stroke="#000" stroke-width="0.9" stroke-linejoin="round" />
<polygon points="1076.2,560.0 1080.0,557.2 1084.4,559.4 1083.8,575.0 1078.1,578.8 1075.6,576.9" fill="#303030" stroke="#000" stroke-width="0.9" stroke-linejoin="round" />
<polygon points="1079.4,561.2 1084.4,559.5 1083.8,575.0 1079.0,577.8" fill="#444444" stroke="#000" stroke-width="0.9" stroke-linejoin="round" />
<polygon points="1158.1,603.1 1162.5,600.6 1200.0,618.8 1203.1,615.6 1206.9,616.2 1207.5,620.0 1205.6,640.0 1200.0,645.0 1193.8,644.4 1157.5,626.2" fill="#202020" stroke="#000" stroke-width="0.9" stroke-linejoin="round" />
<polygon points="1158.1,603.1 1162.5,600.6 1200.0,618.8 1203.1,615.6 1206.9,616.2 1201.2,623.8 1196.2,623.8 1181.2,623.8 1158.1,613.1" fill="#444444" stroke="#000" stroke-width="0.9" stroke-linejoin="round" />
<polyline points="1158.1,620.0 1195.0,638.1 1205.6,633.1" fill="none" stroke="#000" stroke-width="0.8" stroke-linejoin="round" stroke-linecap="round" />
<polygon points="791.2,498.8 855.0,535.0 927.5,576.2 917.5,585.0 842.5,547.5 787.5,512.5" fill="#000" opacity="0.1" filter="url(#blur5)"/>
<polygon points="948.8,588.8 1022.5,629.4 1103.8,675.0 1092.5,682.0 1007.5,645.0 942.5,605.0" fill="#000" opacity="0.1" filter="url(#blur5)"/>
<polygon points="840.0,541.2 850.0,532.5 855.0,533.1 858.1,536.2 857.5,540.0 851.2,541.2 845.6,546.2" fill="#a8283b" stroke="#000" stroke-width="0.9" stroke-linejoin="round" />
<polygon points="840.0,541.2 845.6,546.2 851.2,541.2 846.2,540.0" fill="#7c1c2b" stroke="none" stroke-width="0" stroke-linejoin="round" />
<polygon points="788.8,479.4 797.5,472.2 864.4,508.4 855.6,515.6" fill="#66ccff" stroke="#000" stroke-width="0.9" stroke-linejoin="round" />
<polygon points="855.6,515.6 864.4,508.4 863.8,526.5 855.0,533.8" fill="#1a2b38" stroke="#000" stroke-width="0.9" stroke-linejoin="round" />
<polygon points="788.8,479.4 855.6,515.6 855.0,533.8 790.6,497.5" fill="#346484" stroke="#000" stroke-width="0.9" stroke-linejoin="round" />
<polyline points="792.5,476.0 860.0,512.5" fill="none" stroke="#000" stroke-width="0.6" stroke-linejoin="round" stroke-linecap="round" />
<polygon points="859.4,517.5 867.5,510.3 937.5,549.7 929.4,556.9" fill="#66ccff" stroke="#000" stroke-width="0.9" stroke-linejoin="round" />
<polygon points="929.4,556.9 937.5,549.7 936.2,567.8 928.1,575.0" fill="#1a2b38" stroke="#000" stroke-width="0.9" stroke-linejoin="round" />
<polygon points="859.4,517.5 929.4,556.9 928.1,575.0 860.0,536.2" fill="#346484" stroke="#000" stroke-width="0.9" stroke-linejoin="round" />
<polygon points="861.7,526.5 882.5,538.3 882.5,540.1 861.8,528.4" fill="#4f95c2" stroke="#000" stroke-width="0.5" stroke-linejoin="round" />
<polygon points="905.3,553.0 923.2,563.2 923.1,565.0 905.2,554.9" fill="#4f95c2" stroke="#000" stroke-width="0.5" stroke-linejoin="round" />
<polygon points="863.2,529.8 881.8,540.3 881.8,547.2 863.4,536.7" fill="#3f759b" stroke="#000" stroke-width="0.6" stroke-linejoin="round" />
<polygon points="883.2,532.4 904.1,544.2 903.7,559.2 883.2,547.6" fill="#3d7298" stroke="#000" stroke-width="0.7" stroke-linejoin="round" />
<polygon points="885.3,534.7 902.7,544.5 902.6,549.3 885.2,539.5" fill="#05080a" stroke="none" stroke-width="0" stroke-linejoin="round" />
<polyline points="884.5,546.9 903.0,557.4" fill="none" stroke="#000" stroke-width="0.6" stroke-linejoin="round" stroke-linecap="round" />
<polygon points="863.7,522.7 869.2,525.8 869.3,529.2 863.7,526.0" fill="#3d7298" stroke="#000" stroke-width="0.5" stroke-linejoin="round" />
<circle cx="907.5" cy="550.7" r="1.3" fill="#3a6d90" stroke="#000" stroke-width="0.5"/>
<polygon points="905.2,555.6 921.7,564.9 921.4,570.2 905.0,560.9" fill="#3f759b" stroke="#000" stroke-width="0.6" stroke-linejoin="round" />
<polygon points="872.2,575.0 876.0,572.2 892.9,581.9 892.2,585.0 889.1,586.9 873.5,578.1" fill="#000" opacity="0.12" filter="url(#blur3)"/>
<polyline points="893.1,558.8 884.0,568.5" fill="none" stroke="#000" stroke-width="2.6" stroke-linejoin="round" stroke-linecap="round" />
<polyline points="893.1,558.8 884.0,568.5" fill="none" stroke="#66ccff" stroke-width="1.5" stroke-linejoin="round" stroke-linecap="round" />
<polygon points="876.2,572.2 880.0,569.5 896.9,579.1 896.2,582.2 893.1,584.1 877.5,575.3" fill="#1a2b38" stroke="#000" stroke-width="0.9" stroke-linejoin="round" />
<polygon points="876.2,570.0 880.0,567.2 896.9,576.9 896.2,580.0 893.1,581.9 877.5,573.1" fill="#66ccff" stroke="#000" stroke-width="0.9" stroke-linejoin="round" />
<polygon points="946.9,568.1 955.4,559.5 1032.9,599.5 1024.4,608.1" fill="#66ccff" stroke="#000" stroke-width="0.9" stroke-linejoin="round" />
<polygon points="1024.4,608.1 1032.9,599.5 1031.6,619.5 1023.1,628.1" fill="#1a2b38" stroke="#000" stroke-width="0.9" stroke-linejoin="round" />
<polygon points="946.9,568.1 1024.4,608.1 1023.1,628.1 948.1,587.5" fill="#346484" stroke="#000" stroke-width="0.9" stroke-linejoin="round" />
<polygon points="998.6,603.2 1021.6,615.3 1021.4,617.3 998.6,605.2" fill="#4f95c2" stroke="#000" stroke-width="0.5" stroke-linejoin="round" />
<polygon points="953.6,581.4 973.4,591.9 973.5,593.9 953.7,583.4" fill="#4f95c2" stroke="#000" stroke-width="0.5" stroke-linejoin="round" />
<polygon points="999.3,606.2 1019.9,617.1 1019.5,624.5 999.2,613.5" fill="#3f759b" stroke="#000" stroke-width="0.6" stroke-linejoin="round" />
<polygon points="974.8,584.1 998.0,596.1 997.7,612.3 975.1,600.2" fill="#3d7298" stroke="#000" stroke-width="0.7" stroke-linejoin="round" />
<polygon points="976.4,586.1 995.7,596.1 995.6,601.2 976.4,591.2" fill="#05080a" stroke="none" stroke-width="0" stroke-linejoin="round" />
<polyline points="996.2,609.9 975.8,599.0" fill="none" stroke="#000" stroke-width="0.6" stroke-linejoin="round" stroke-linecap="round" />
<polygon points="1013.4,605.5 1019.6,608.7 1019.4,612.3 1013.2,609.1" fill="#3d7298" stroke="#000" stroke-width="0.5" stroke-linejoin="round" />
<circle cx="971.1" cy="587.0" r="1.3" fill="#3a6d90" stroke="#000" stroke-width="0.5"/>
<polygon points="955.3,585.0 973.5,594.7 973.6,600.3 955.6,590.6" fill="#3f759b" stroke="#000" stroke-width="0.6" stroke-linejoin="round" />
<polygon points="926.6,605.6 930.4,601.9 946.6,611.9 946.0,615.6 942.9,617.5 927.9,608.8" fill="#000" opacity="0.12" filter="url(#blur3)"/>
<polyline points="950.0,590.0 938.8,599.4" fill="none" stroke="#000" stroke-width="2.6" stroke-linejoin="round" stroke-linecap="round" />
<polyline points="950.0,590.0 938.8,599.4" fill="none" stroke="#66ccff" stroke-width="1.5" stroke-linejoin="round" stroke-linecap="round" />
<polygon points="930.6,602.8 934.4,599.1 950.6,609.1 950.0,612.8 946.9,614.7 931.9,606.0" fill="#1a2b38" stroke="#000" stroke-width="0.9" stroke-linejoin="round" />
<polygon points="930.6,600.6 934.4,596.9 950.6,606.9 950.0,610.6 946.9,612.5 931.9,603.8" fill="#66ccff" stroke="#000" stroke-width="0.9" stroke-linejoin="round" />
<polyline points="995.0,615.0 984.4,624.4" fill="none" stroke="#4a0f18" stroke-width="2.6" stroke-linejoin="round" stroke-linecap="round" />
<polyline points="995.0,615.0 984.4,624.4" fill="none" stroke="#a8283b" stroke-width="1.6" stroke-linejoin="round" stroke-linecap="round" />
<polygon points="1026.2,611.2 1034.2,602.8 1114.2,646.5 1106.2,655.0" fill="#66ccff" stroke="#000" stroke-width="0.9" stroke-linejoin="round" />
<polygon points="1106.2,655.0 1114.2,646.5 1111.8,665.2 1103.8,673.8" fill="#1a2b38" stroke="#000" stroke-width="0.9" stroke-linejoin="round" />
<polygon points="1026.2,611.2 1106.2,655.0 1103.8,673.8 1025.6,630.0" fill="#346484" stroke="#000" stroke-width="0.9" stroke-linejoin="round" />
<polygon points="1079.1,648.4 1102.8,661.6 1102.6,663.4 1078.9,650.3" fill="#4f95c2" stroke="#000" stroke-width="0.5" stroke-linejoin="round" />
<polygon points="1032.2,624.5 1052.8,635.9 1052.7,637.8 1032.2,626.4" fill="#4f95c2" stroke="#000" stroke-width="0.5" stroke-linejoin="round" />
<polygon points="1079.6,651.3 1100.9,663.1 1100.0,670.1 1078.9,658.2" fill="#3f759b" stroke="#000" stroke-width="0.6" stroke-linejoin="round" />
<polygon points="1054.9,628.5 1078.9,641.6 1077.4,657.0 1053.9,643.9" fill="#3d7298" stroke="#000" stroke-width="0.7" stroke-linejoin="round" />
<polygon points="1056.5,630.5 1076.4,641.4 1075.9,646.3 1056.1,635.4" fill="#05080a" stroke="none" stroke-width="0" stroke-linejoin="round" />
<polyline points="1076.0,654.6 1054.8,642.8" fill="none" stroke="#000" stroke-width="0.6" stroke-linejoin="round" stroke-linecap="round" />
<polygon points="1094.7,651.7 1101.1,655.2 1100.7,658.6 1094.3,655.1" fill="#3d7298" stroke="#000" stroke-width="0.5" stroke-linejoin="round" />
<circle cx="1050.7" cy="631.0" r="1.3" fill="#3a6d90" stroke="#000" stroke-width="0.5"/>
<polygon points="1033.7,628.0 1052.6,638.5 1052.3,643.9 1033.5,633.4" fill="#3f759b" stroke="#000" stroke-width="0.6" stroke-linejoin="round" />
<polygon points="1006.6,650.6 1011.0,646.9 1027.2,657.5 1026.6,661.2 1023.5,663.1 1007.9,654.4" fill="#000" opacity="0.12" filter="url(#blur3)"/>
<polyline points="1028.1,634.4 1018.8,644.4" fill="none" stroke="#000" stroke-width="2.6" stroke-linejoin="round" stroke-linecap="round" />
<polyline points="1028.1,634.4 1018.8,644.4" fill="none" stroke="#66ccff" stroke-width="1.5" stroke-linejoin="round" stroke-linecap="round" />
<polygon points="1010.6,647.8 1015.0,644.1 1031.2,654.7 1030.6,658.5 1027.5,660.3 1011.9,651.6" fill="#1a2b38" stroke="#000" stroke-width="0.9" stroke-linejoin="round" />
<polygon points="1010.6,645.6 1015.0,641.9 1031.2,652.5 1030.6,656.2 1027.5,658.1 1011.9,649.4" fill="#66ccff" stroke="#000" stroke-width="0.9" stroke-linejoin="round" />
<polyline points="1077.5,661.2 1066.9,671.2" fill="none" stroke="#4a0f18" stroke-width="2.6" stroke-linejoin="round" stroke-linecap="round" />
<polyline points="1077.5,661.2 1066.9,671.2" fill="none" stroke="#a8283b" stroke-width="1.6" stroke-linejoin="round" stroke-linecap="round" />
<polygon points="1127.5,678.8 1132.5,670.0 1138.8,661.9 1144.4,663.1 1143.8,667.5 1138.8,675.0 1132.5,682.0 1128.1,682.0" fill="#8e1f30" stroke="#000" stroke-width="0.9" stroke-linejoin="round" />
<polygon points="1128.1,682.0 1132.5,682.0 1131.2,685.6 1126.9,685.0" fill="#8e1f30" stroke="#000" stroke-width="0.9" stroke-linejoin="round" />
<polygon points="1130.6,635.0 1135.0,630.6 1143.8,623.8 1148.8,625.0 1150.6,628.1 1148.8,631.2 1145.6,633.1 1149.4,639.4 1151.0,643.1 1149.4,646.2 1141.2,646.2 1132.5,641.9" fill="#66ccff" stroke="#000" stroke-width="0.9" stroke-linejoin="round" />
<polyline points="1135.0,630.6 1140.0,632.5 1149.4,639.4" fill="none" stroke="#000" stroke-width="0.6" stroke-linejoin="round" stroke-linecap="round" />
<polyline points="1140.0,632.5 1132.5,641.9" fill="none" stroke="#000" stroke-width="0.6" stroke-linejoin="round" stroke-linecap="round" />
<polygon points="440.0,640.0 455.0,660.0 600.0,765.0 670.0,712.0 660.0,700.0 600.0,745.0" fill="#000" opacity="0.3" filter="url(#blur5)"/>
<polygon points="446.9,630.6 447.5,635.0 453.8,649.4 454.5,653.0 535.5,712.0 535.0,708.1" fill="#346484" stroke="#000" stroke-width="0.9" stroke-linejoin="round" />
<polygon points="540.6,713.8 596.2,752.5 597.0,756.0 541.0,717.3" fill="#346484" stroke="#000" stroke-width="0.9" stroke-linejoin="round" />
<polygon points="596.2,752.5 662.5,700.6 662.8,703.8 597.0,756.0" fill="#1a2b38" stroke="#000" stroke-width="0.9" stroke-linejoin="round" />
<polygon points="500.0,589.8 662.5,700.6 596.2,752.5 540.6,713.8 544.0,703.5 535.0,708.1 453.8,649.4 447.5,635.0 446.9,630.6" fill="#66ccff" stroke="#000" stroke-width="0.9" stroke-linejoin="round" />
<polyline points="452.0,628.0 503.0,592.5 659.0,699.5" fill="none" stroke="#000" stroke-width="0.5" stroke-linejoin="round" stroke-linecap="round" />
<polygon points="500.5,590.5 507.6,595.3 500.6,600.8 493.6,596.0" fill="#346484" stroke="#000" stroke-width="0.65" stroke-linejoin="round" />
<polygon points="493.6,596.0 500.6,600.8 502.1,594.9 496.9,591.3" fill="#346484" stroke="#000" stroke-width="0.65" stroke-linejoin="round" />
<polygon points="507.6,595.3 500.6,600.8 502.1,594.9 505.9,591.9" fill="#2a5470" stroke="#000" stroke-width="0.65" stroke-linejoin="round" />
<polygon points="500.5,590.5 493.6,596.0 496.9,591.3 500.7,588.3" fill="#3f7aa2" stroke="#000" stroke-width="0.4" stroke-linejoin="round" />
<polygon points="500.7,588.3 505.9,591.9 502.1,594.9 496.9,591.3" fill="#66ccff" stroke="#000" stroke-width="0.65" stroke-linejoin="round" />
<polygon points="508.4,595.9 515.5,600.7 508.5,606.2 501.4,601.3" fill="#346484" stroke="#000" stroke-width="0.65" stroke-linejoin="round" />
<polygon points="501.4,601.3 508.5,606.2 510.0,600.2 504.8,596.7" fill="#346484" stroke="#000" stroke-width="0.65" stroke-linejoin="round" />
<polygon points="515.5,600.7 508.5,606.2 510.0,600.2 513.8,597.2" fill="#2a5470" stroke="#000" stroke-width="0.65" stroke-linejoin="round" />
<polygon points="508.4,595.9 501.4,601.3 504.8,596.7 508.6,593.7" fill="#3f7aa2" stroke="#000" stroke-width="0.4" stroke-linejoin="round" />
<polygon points="508.6,593.7 513.8,597.2 510.0,600.2 504.8,596.7" fill="#66ccff" stroke="#000" stroke-width="0.65" stroke-linejoin="round" />
<polygon points="519.4,603.4 535.0,614.0 528.0,619.5 512.5,608.9" fill="#346484" stroke="#000" stroke-width="0.65" stroke-linejoin="round" />
<polygon points="512.5,608.9 528.0,619.5 529.4,614.3 515.8,604.9" fill="#346484" stroke="#000" stroke-width="0.65" stroke-linejoin="round" />
<polygon points="535.0,614.0 528.0,619.5 529.4,614.3 533.3,611.2" fill="#2a5470" stroke="#000" stroke-width="0.65" stroke-linejoin="round" />
<polygon points="519.4,603.4 512.5,608.9 515.8,604.9 519.6,601.9" fill="#3f7aa2" stroke="#000" stroke-width="0.4" stroke-linejoin="round" />
<polygon points="519.6,601.9 533.3,611.2 529.4,614.3 515.8,604.9" fill="#66ccff" stroke="#000" stroke-width="0.65" stroke-linejoin="round" />
<polygon points="535.8,614.5 551.4,625.2 544.4,630.8 528.8,620.1" fill="#346484" stroke="#000" stroke-width="0.65" stroke-linejoin="round" />
<polygon points="528.8,620.1 544.4,630.8 545.9,625.5 532.1,616.1" fill="#346484" stroke="#000" stroke-width="0.65" stroke-linejoin="round" />
<polygon points="551.4,625.2 544.4,630.8 545.9,625.5 549.7,622.5" fill="#2a5470" stroke="#000" stroke-width="0.65" stroke-linejoin="round" />
<polygon points="535.8,614.5 528.8,620.1 532.1,616.1 536.0,613.1" fill="#3f7aa2" stroke="#000" stroke-width="0.4" stroke-linejoin="round" />
<polygon points="536.0,613.1 549.7,622.5 545.9,625.5 532.1,616.1" fill="#66ccff" stroke="#000" stroke-width="0.65" stroke-linejoin="round" />
<polygon points="552.2,625.8 568.0,636.5 561.0,642.1 545.2,631.3" fill="#346484" stroke="#000" stroke-width="0.65" stroke-linejoin="round" />
<polygon points="545.2,631.3 561.0,642.1 562.4,636.8 548.6,627.4" fill="#346484" stroke="#000" stroke-width="0.65" stroke-linejoin="round" />
<polygon points="568.0,636.5 561.0,642.1 562.4,636.8 566.3,633.8" fill="#2a5470" stroke="#000" stroke-width="0.65" stroke-linejoin="round" />
<polygon points="552.2,625.8 545.2,631.3 548.6,627.4 552.4,624.3" fill="#3f7aa2" stroke="#000" stroke-width="0.4" stroke-linejoin="round" />
<polygon points="552.4,624.3 566.3,633.8 562.4,636.8 548.6,627.4" fill="#66ccff" stroke="#000" stroke-width="0.65" stroke-linejoin="round" />
<polygon points="568.8,637.1 584.7,647.9 577.7,653.5 561.8,642.6" fill="#346484" stroke="#000" stroke-width="0.65" stroke-linejoin="round" />
<polygon points="561.8,642.6 577.7,653.5 579.1,648.2 565.2,638.7" fill="#346484" stroke="#000" stroke-width="0.65" stroke-linejoin="round" />
<polygon points="584.7,647.9 577.7,653.5 579.1,648.2 583.0,645.2" fill="#2a5470" stroke="#000" stroke-width="0.65" stroke-linejoin="round" />
<polygon points="568.8,637.1 561.8,642.6 565.2,638.7 569.0,635.7" fill="#3f7aa2" stroke="#000" stroke-width="0.4" stroke-linejoin="round" />
<polygon points="569.0,635.7 583.0,645.2 579.1,648.2 565.2,638.7" fill="#66ccff" stroke="#000" stroke-width="0.65" stroke-linejoin="round" />
<polygon points="585.5,648.5 601.6,659.4 594.5,665.0 578.5,654.1" fill="#346484" stroke="#000" stroke-width="0.65" stroke-linejoin="round" />
<polygon points="578.5,654.1 594.5,665.0 595.9,659.7 581.9,650.1" fill="#346484" stroke="#000" stroke-width="0.65" stroke-linejoin="round" />
<polygon points="601.6,659.4 594.5,665.0 595.9,659.7 599.8,656.7" fill="#2a5470" stroke="#000" stroke-width="0.65" stroke-linejoin="round" />
<polygon points="585.5,648.5 578.5,654.1 581.9,650.1 585.8,647.1" fill="#3f7aa2" stroke="#000" stroke-width="0.4" stroke-linejoin="round" />
<polygon points="585.8,647.1 599.8,656.7 595.9,659.7 581.9,650.1" fill="#66ccff" stroke="#000" stroke-width="0.65" stroke-linejoin="round" />
<polygon points="606.5,662.8 613.9,667.8 606.8,673.4 599.4,668.4" fill="#346484" stroke="#000" stroke-width="0.65" stroke-linejoin="round" />
<polygon points="599.4,668.4 606.8,673.4 608.2,667.6 602.8,663.9" fill="#346484" stroke="#000" stroke-width="0.65" stroke-linejoin="round" />
<polygon points="613.9,667.8 606.8,673.4 608.2,667.6 612.1,664.6" fill="#2a5470" stroke="#000" stroke-width="0.65" stroke-linejoin="round" />
<polygon points="606.5,662.8 599.4,668.4 602.8,663.9 606.7,660.9" fill="#3f7aa2" stroke="#000" stroke-width="0.4" stroke-linejoin="round" />
<polygon points="606.7,660.9 612.1,664.6 608.2,667.6 602.8,663.9" fill="#66ccff" stroke="#000" stroke-width="0.65" stroke-linejoin="round" />
<polygon points="614.7,668.4 622.2,673.5 615.0,679.1 607.6,674.0" fill="#346484" stroke="#000" stroke-width="0.65" stroke-linejoin="round" />
<polygon points="607.6,674.0 615.0,679.1 616.5,673.3 611.0,669.6" fill="#346484" stroke="#000" stroke-width="0.65" stroke-linejoin="round" />
<polygon points="622.2,673.5 615.0,679.1 616.5,673.3 620.4,670.2" fill="#2a5470" stroke="#000" stroke-width="0.65" stroke-linejoin="round" />
<polygon points="614.7,668.4 607.6,674.0 611.0,669.6 614.9,666.5" fill="#3f7aa2" stroke="#000" stroke-width="0.4" stroke-linejoin="round" />
<polygon points="614.9,666.5 620.4,670.2 616.5,673.3 611.0,669.6" fill="#66ccff" stroke="#000" stroke-width="0.65" stroke-linejoin="round" />
<polygon points="626.3,676.3 634.1,681.6 626.9,687.3 619.1,681.9" fill="#346484" stroke="#000" stroke-width="0.65" stroke-linejoin="round" />
<polygon points="619.1,681.9 626.9,687.3 628.4,681.4 622.6,677.5" fill="#346484" stroke="#000" stroke-width="0.65" stroke-linejoin="round" />
<polygon points="634.1,681.6 626.9,687.3 628.4,681.4 632.3,678.4" fill="#2a5470" stroke="#000" stroke-width="0.65" stroke-linejoin="round" />
<polygon points="626.3,676.3 619.1,681.9 622.6,677.5 626.5,674.4" fill="#3f7aa2" stroke="#000" stroke-width="0.4" stroke-linejoin="round" />
<polygon points="626.5,674.4 632.3,678.4 628.4,681.4 622.6,677.5" fill="#66ccff" stroke="#000" stroke-width="0.65" stroke-linejoin="round" />
<polygon points="634.8,682.1 642.6,687.4 635.4,693.1 627.6,687.7" fill="#346484" stroke="#000" stroke-width="0.65" stroke-linejoin="round" />
<polygon points="627.6,687.7 635.4,693.1 636.9,687.2 631.1,683.3" fill="#346484" stroke="#000" stroke-width="0.65" stroke-linejoin="round" />
<polygon points="642.6,687.4 635.4,693.1 636.9,687.2 640.8,684.2" fill="#2a5470" stroke="#000" stroke-width="0.65" stroke-linejoin="round" />
<polygon points="634.8,682.1 627.6,687.7 631.1,683.3 635.0,680.2" fill="#3f7aa2" stroke="#000" stroke-width="0.4" stroke-linejoin="round" />
<polygon points="635.0,680.2 640.8,684.2 636.9,687.2 631.1,683.3" fill="#66ccff" stroke="#000" stroke-width="0.65" stroke-linejoin="round" />
<polygon points="643.3,687.9 651.1,693.3 643.9,698.9 636.1,693.5" fill="#346484" stroke="#000" stroke-width="0.65" stroke-linejoin="round" />
<polygon points="636.1,693.5 643.9,698.9 645.4,693.1 639.6,689.1" fill="#346484" stroke="#000" stroke-width="0.65" stroke-linejoin="round" />
<polygon points="651.1,693.3 643.9,698.9 645.4,693.1 649.4,690.0" fill="#2a5470" stroke="#000" stroke-width="0.65" stroke-linejoin="round" />
<polygon points="643.3,687.9 636.1,693.5 639.6,689.1 643.5,686.0" fill="#3f7aa2" stroke="#000" stroke-width="0.4" stroke-linejoin="round" />
<polygon points="643.5,686.0 649.4,690.0 645.4,693.1 639.6,689.1" fill="#66ccff" stroke="#000" stroke-width="0.65" stroke-linejoin="round" />
<polygon points="651.8,693.7 659.7,699.1 652.5,704.7 644.6,699.3" fill="#346484" stroke="#000" stroke-width="0.65" stroke-linejoin="round" />
<polygon points="644.6,699.3 652.5,704.7 654.0,698.9 648.1,694.9" fill="#346484" stroke="#000" stroke-width="0.65" stroke-linejoin="round" />
<polygon points="659.7,699.1 652.5,704.7 654.0,698.9 657.9,695.8" fill="#2a5470" stroke="#000" stroke-width="0.65" stroke-linejoin="round" />
<polygon points="651.8,693.7 644.6,699.3 648.1,694.9 652.0,691.8" fill="#3f7aa2" stroke="#000" stroke-width="0.4" stroke-linejoin="round" />
<polygon points="652.0,691.8 657.9,695.8 654.0,698.9 648.1,694.9" fill="#66ccff" stroke="#000" stroke-width="0.65" stroke-linejoin="round" />
<polygon points="489.5,598.7 496.6,603.5 487.5,610.7 480.5,605.9" fill="#346484" stroke="#000" stroke-width="0.65" stroke-linejoin="round" />
<polygon points="480.5,605.9 487.5,610.7 489.0,605.5 483.8,601.9" fill="#346484" stroke="#000" stroke-width="0.65" stroke-linejoin="round" />
<polygon points="496.6,603.5 487.5,610.7 489.0,605.5 494.9,600.8" fill="#2a5470" stroke="#000" stroke-width="0.65" stroke-linejoin="round" />
<polygon points="489.5,598.7 480.5,605.9 483.8,601.9 489.7,597.2" fill="#3f7aa2" stroke="#000" stroke-width="0.4" stroke-linejoin="round" />
<polygon points="489.7,597.2 494.9,600.8 489.0,605.5 483.8,601.9" fill="#66ccff" stroke="#000" stroke-width="0.65" stroke-linejoin="round" />
<polygon points="497.2,604.0 504.4,608.9 495.3,616.0 488.2,611.1" fill="#346484" stroke="#000" stroke-width="0.65" stroke-linejoin="round" />
<polygon points="488.2,611.1 495.3,616.0 496.7,610.8 491.5,607.2" fill="#346484" stroke="#000" stroke-width="0.65" stroke-linejoin="round" />
<polygon points="504.4,608.9 495.3,616.0 496.7,610.8 502.7,606.1" fill="#2a5470" stroke="#000" stroke-width="0.65" stroke-linejoin="round" />
<polygon points="497.2,604.0 488.2,611.1 491.5,607.2 497.4,602.5" fill="#3f7aa2" stroke="#000" stroke-width="0.4" stroke-linejoin="round" />
<polygon points="497.4,602.5 502.7,606.1 496.7,610.8 491.5,607.2" fill="#66ccff" stroke="#000" stroke-width="0.65" stroke-linejoin="round" />
<polygon points="505.0,609.3 512.2,614.2 503.1,621.4 496.0,616.5" fill="#346484" stroke="#000" stroke-width="0.65" stroke-linejoin="round" />
<polygon points="496.0,616.5 503.1,621.4 504.6,616.2 499.3,612.6" fill="#346484" stroke="#000" stroke-width="0.65" stroke-linejoin="round" />
<polygon points="512.2,614.2 503.1,621.4 504.6,616.2 510.5,611.5" fill="#2a5470" stroke="#000" stroke-width="0.65" stroke-linejoin="round" />
<polygon points="505.0,609.3 496.0,616.5 499.3,612.6 505.2,607.9" fill="#3f7aa2" stroke="#000" stroke-width="0.4" stroke-linejoin="round" />
<polygon points="505.2,607.9 510.5,611.5 504.6,616.2 499.3,612.6" fill="#66ccff" stroke="#000" stroke-width="0.65" stroke-linejoin="round" />
<polygon points="512.9,614.7 520.1,619.6 511.0,626.8 503.8,621.9" fill="#346484" stroke="#000" stroke-width="0.65" stroke-linejoin="round" />
<polygon points="503.8,621.9 511.0,626.8 512.4,621.6 507.1,617.9" fill="#346484" stroke="#000" stroke-width="0.65" stroke-linejoin="round" />
<polygon points="520.1,619.6 511.0,626.8 512.4,621.6 518.4,616.9" fill="#2a5470" stroke="#000" stroke-width="0.65" stroke-linejoin="round" />
<polygon points="512.9,614.7 503.8,621.9 507.1,617.9 513.1,613.2" fill="#3f7aa2" stroke="#000" stroke-width="0.4" stroke-linejoin="round" />
<polygon points="513.1,613.2 518.4,616.9 512.4,621.6 507.1,617.9" fill="#66ccff" stroke="#000" stroke-width="0.65" stroke-linejoin="round" />
<polygon points="520.7,620.1 528.0,625.1 518.8,632.3 511.6,627.3" fill="#346484" stroke="#000" stroke-width="0.65" stroke-linejoin="round" />
<polygon points="511.6,627.3 518.8,632.3 520.3,627.0 515.0,623.4" fill="#346484" stroke="#000" stroke-width="0.65" stroke-linejoin="round" />
<polygon points="528.0,625.1 518.8,632.3 520.3,627.0 526.3,622.3" fill="#2a5470" stroke="#000" stroke-width="0.65" stroke-linejoin="round" />
<polygon points="520.7,620.1 511.6,627.3 515.0,623.4 520.9,618.6" fill="#3f7aa2" stroke="#000" stroke-width="0.4" stroke-linejoin="round" />
<polygon points="520.9,618.6 526.3,622.3 520.3,627.0 515.0,623.4" fill="#66ccff" stroke="#000" stroke-width="0.65" stroke-linejoin="round" />
<polygon points="528.6,625.5 535.9,630.5 526.7,637.7 519.5,632.7" fill="#346484" stroke="#000" stroke-width="0.65" stroke-linejoin="round" />
<polygon points="519.5,632.7 526.7,637.7 528.2,632.4 522.9,628.8" fill="#346484" stroke="#000" stroke-width="0.65" stroke-linejoin="round" />
<polygon points="535.9,630.5 526.7,637.7 528.2,632.4 534.2,627.7" fill="#2a5470" stroke="#000" stroke-width="0.65" stroke-linejoin="round" />
<polygon points="528.6,625.5 519.5,632.7 522.9,628.8 528.8,624.1" fill="#3f7aa2" stroke="#000" stroke-width="0.4" stroke-linejoin="round" />
<polygon points="528.8,624.1 534.2,627.7 528.2,632.4 522.9,628.8" fill="#66ccff" stroke="#000" stroke-width="0.65" stroke-linejoin="round" />
<polygon points="536.6,630.9 543.8,635.9 534.7,643.2 527.4,638.2" fill="#346484" stroke="#000" stroke-width="0.65" stroke-linejoin="round" />
<polygon points="527.4,638.2 534.7,643.2 536.1,637.9 530.8,634.2" fill="#346484" stroke="#000" stroke-width="0.65" stroke-linejoin="round" />
<polygon points="543.8,635.9 534.7,643.2 536.1,637.9 542.1,633.2" fill="#2a5470" stroke="#000" stroke-width="0.65" stroke-linejoin="round" />
<polygon points="536.6,630.9 527.4,638.2 530.8,634.2 536.8,629.5" fill="#3f7aa2" stroke="#000" stroke-width="0.4" stroke-linejoin="round" />
<polygon points="536.8,629.5 542.1,633.2 536.1,637.9 530.8,634.2" fill="#66ccff" stroke="#000" stroke-width="0.65" stroke-linejoin="round" />
<polygon points="544.5,636.4 551.8,641.4 542.6,648.6 535.3,643.6" fill="#346484" stroke="#000" stroke-width="0.65" stroke-linejoin="round" />
<polygon points="535.3,643.6 542.6,648.6 544.1,643.4 538.7,639.7" fill="#346484" stroke="#000" stroke-width="0.65" stroke-linejoin="round" />
<polygon points="551.8,641.4 542.6,648.6 544.1,643.4 550.1,638.6" fill="#2a5470" stroke="#000" stroke-width="0.65" stroke-linejoin="round" />
<polygon points="544.5,636.4 535.3,643.6 538.7,639.7 544.7,635.0" fill="#3f7aa2" stroke="#000" stroke-width="0.4" stroke-linejoin="round" />
<polygon points="544.7,635.0 550.1,638.6 544.1,643.4 538.7,639.7" fill="#66ccff" stroke="#000" stroke-width="0.65" stroke-linejoin="round" />
<polygon points="552.5,641.9 559.8,646.9 550.6,654.2 543.3,649.1" fill="#346484" stroke="#000" stroke-width="0.65" stroke-linejoin="round" />
<polygon points="543.3,649.1 550.6,654.2 552.1,648.9 546.7,645.2" fill="#346484" stroke="#000" stroke-width="0.65" stroke-linejoin="round" />
<polygon points="559.8,646.9 550.6,654.2 552.1,648.9 558.1,644.1" fill="#2a5470" stroke="#000" stroke-width="0.65" stroke-linejoin="round" />
<polygon points="552.5,641.9 543.3,649.1 546.7,645.2 552.7,640.4" fill="#3f7aa2" stroke="#000" stroke-width="0.4" stroke-linejoin="round" />
<polygon points="552.7,640.4 558.1,644.1 552.1,648.9 546.7,645.2" fill="#66ccff" stroke="#000" stroke-width="0.65" stroke-linejoin="round" />
<polygon points="560.5,647.4 567.9,652.4 558.6,659.7 551.3,654.6" fill="#346484" stroke="#000" stroke-width="0.65" stroke-linejoin="round" />
<polygon points="551.3,654.6 558.6,659.7 560.1,654.4 554.7,650.7" fill="#346484" stroke="#000" stroke-width="0.65" stroke-linejoin="round" />
<polygon points="567.9,652.4 558.6,659.7 560.1,654.4 566.1,649.6" fill="#2a5470" stroke="#000" stroke-width="0.65" stroke-linejoin="round" />
<polygon points="560.5,647.4 551.3,654.6 554.7,650.7 560.7,645.9" fill="#3f7aa2" stroke="#000" stroke-width="0.4" stroke-linejoin="round" />
<polygon points="560.7,645.9 566.1,649.6 560.1,654.4 554.7,650.7" fill="#66ccff" stroke="#000" stroke-width="0.65" stroke-linejoin="round" />
<polygon points="568.5,652.9 575.9,657.9 566.7,665.2 559.3,660.1" fill="#346484" stroke="#000" stroke-width="0.65" stroke-linejoin="round" />
<polygon points="559.3,660.1 566.7,665.2 568.1,659.9 562.7,656.2" fill="#346484" stroke="#000" stroke-width="0.65" stroke-linejoin="round" />
<polygon points="575.9,657.9 566.7,665.2 568.1,659.9 574.2,655.2" fill="#2a5470" stroke="#000" stroke-width="0.65" stroke-linejoin="round" />
<polygon points="568.5,652.9 559.3,660.1 562.7,656.2 568.8,651.4" fill="#3f7aa2" stroke="#000" stroke-width="0.4" stroke-linejoin="round" />
<polygon points="568.8,651.4 574.2,655.2 568.1,659.9 562.7,656.2" fill="#66ccff" stroke="#000" stroke-width="0.65" stroke-linejoin="round" />
<polygon points="576.6,658.4 584.0,663.5 574.7,670.8 567.4,665.7" fill="#346484" stroke="#000" stroke-width="0.65" stroke-linejoin="round" />
<polygon points="567.4,665.7 574.7,670.8 576.2,665.5 570.8,661.7" fill="#346484" stroke="#000" stroke-width="0.65" stroke-linejoin="round" />
<polygon points="584.0,663.5 574.7,670.8 576.2,665.5 582.3,660.7" fill="#2a5470" stroke="#000" stroke-width="0.65" stroke-linejoin="round" />
<polygon points="576.6,658.4 567.4,665.7 570.8,661.7 576.8,657.0" fill="#3f7aa2" stroke="#000" stroke-width="0.4" stroke-linejoin="round" />
<polygon points="576.8,657.0 582.3,660.7 576.2,665.5 570.8,661.7" fill="#66ccff" stroke="#000" stroke-width="0.65" stroke-linejoin="round" />
<polygon points="584.7,664.0 592.1,669.1 582.8,676.4 575.4,671.2" fill="#346484" stroke="#000" stroke-width="0.65" stroke-linejoin="round" />
<polygon points="575.4,671.2 582.8,676.4 584.3,671.1 578.8,667.3" fill="#346484" stroke="#000" stroke-width="0.65" stroke-linejoin="round" />
<polygon points="592.1,669.1 582.8,676.4 584.3,671.1 590.4,666.3" fill="#2a5470" stroke="#000" stroke-width="0.65" stroke-linejoin="round" />
<polygon points="584.7,664.0 575.4,671.2 578.8,667.3 584.9,662.5" fill="#3f7aa2" stroke="#000" stroke-width="0.4" stroke-linejoin="round" />
<polygon points="584.9,662.5 590.4,666.3 584.3,671.1 578.8,667.3" fill="#66ccff" stroke="#000" stroke-width="0.65" stroke-linejoin="round" />
<polygon points="592.8,669.5 600.3,674.6 591.0,682.0 583.5,676.8" fill="#346484" stroke="#000" stroke-width="0.65" stroke-linejoin="round" />
<polygon points="583.5,676.8 591.0,682.0 592.4,676.6 587.0,672.9" fill="#346484" stroke="#000" stroke-width="0.65" stroke-linejoin="round" />
<polygon points="600.3,674.6 591.0,682.0 592.4,676.6 598.5,671.9" fill="#2a5470" stroke="#000" stroke-width="0.65" stroke-linejoin="round" />
<polygon points="592.8,669.5 583.5,676.8 587.0,672.9 593.0,668.1" fill="#3f7aa2" stroke="#000" stroke-width="0.4" stroke-linejoin="round" />
<polygon points="593.0,668.1 598.5,671.9 592.4,676.6 587.0,672.9" fill="#66ccff" stroke="#000" stroke-width="0.65" stroke-linejoin="round" />
<polygon points="601.0,675.1 607.0,679.3 597.7,686.6 591.7,682.4" fill="#346484" stroke="#000" stroke-width="0.65" stroke-linejoin="round" />
<polygon points="591.7,682.4 597.7,686.6 599.2,681.3 595.1,678.5" fill="#346484" stroke="#000" stroke-width="0.65" stroke-linejoin="round" />
<polygon points="607.0,679.3 597.7,686.6 599.2,681.3 605.3,676.5" fill="#2a5470" stroke="#000" stroke-width="0.65" stroke-linejoin="round" />
<polygon points="601.0,675.1 591.7,682.4 595.1,678.5 601.2,673.7" fill="#3f7aa2" stroke="#000" stroke-width="0.4" stroke-linejoin="round" />
<polygon points="601.2,673.7 605.3,676.5 599.2,681.3 595.1,678.5" fill="#66ccff" stroke="#000" stroke-width="0.65" stroke-linejoin="round" />
<polygon points="480.0,606.3 491.7,614.4 482.6,621.5 470.9,613.4" fill="#346484" stroke="#000" stroke-width="0.65" stroke-linejoin="round" />
<polygon points="470.9,613.4 482.6,621.5 484.1,616.3 474.2,609.5" fill="#346484" stroke="#000" stroke-width="0.65" stroke-linejoin="round" />
<polygon points="491.7,614.4 482.6,621.5 484.1,616.3 490.0,611.6" fill="#2a5470" stroke="#000" stroke-width="0.65" stroke-linejoin="round" />
<polygon points="480.0,606.3 470.9,613.4 474.2,609.5 480.2,604.8" fill="#3f7aa2" stroke="#000" stroke-width="0.4" stroke-linejoin="round" />
<polygon points="480.2,604.8 490.0,611.6 484.1,616.3 474.2,609.5" fill="#66ccff" stroke="#000" stroke-width="0.65" stroke-linejoin="round" />
<polygon points="492.3,614.8 499.5,619.7 490.4,626.9 483.3,622.0" fill="#346484" stroke="#000" stroke-width="0.65" stroke-linejoin="round" />
<polygon points="483.3,622.0 490.4,626.9 491.8,621.7 486.6,618.0" fill="#346484" stroke="#000" stroke-width="0.65" stroke-linejoin="round" />
<polygon points="499.5,619.7 490.4,626.9 491.8,621.7 497.8,617.0" fill="#2a5470" stroke="#000" stroke-width="0.65" stroke-linejoin="round" />
<polygon points="492.3,614.8 483.3,622.0 486.6,618.0 492.5,613.3" fill="#3f7aa2" stroke="#000" stroke-width="0.4" stroke-linejoin="round" />
<polygon points="492.5,613.3 497.8,617.0 491.8,621.7 486.6,618.0" fill="#66ccff" stroke="#000" stroke-width="0.65" stroke-linejoin="round" />
<polygon points="500.1,620.2 507.3,625.1 498.2,632.3 491.0,627.4" fill="#346484" stroke="#000" stroke-width="0.65" stroke-linejoin="round" />
<polygon points="491.0,627.4 498.2,632.3 499.7,627.1 494.4,623.4" fill="#346484" stroke="#000" stroke-width="0.65" stroke-linejoin="round" />
<polygon points="507.3,625.1 498.2,632.3 499.7,627.1 505.6,622.4" fill="#2a5470" stroke="#000" stroke-width="0.65" stroke-linejoin="round" />
<polygon points="500.1,620.2 491.0,627.4 494.4,623.4 500.3,618.7" fill="#3f7aa2" stroke="#000" stroke-width="0.4" stroke-linejoin="round" />
<polygon points="500.3,618.7 505.6,622.4 499.7,627.1 494.4,623.4" fill="#66ccff" stroke="#000" stroke-width="0.65" stroke-linejoin="round" />
<polygon points="508.0,625.6 515.2,630.5 506.0,637.7 498.9,632.8" fill="#346484" stroke="#000" stroke-width="0.65" stroke-linejoin="round" />
<polygon points="498.9,632.8 506.0,637.7 507.5,632.5 502.2,628.8" fill="#346484" stroke="#000" stroke-width="0.65" stroke-linejoin="round" />
<polygon points="515.2,630.5 506.0,637.7 507.5,632.5 513.5,627.8" fill="#2a5470" stroke="#000" stroke-width="0.65" stroke-linejoin="round" />
<polygon points="508.0,625.6 498.9,632.8 502.2,628.8 508.2,624.1" fill="#3f7aa2" stroke="#000" stroke-width="0.4" stroke-linejoin="round" />
<polygon points="508.2,624.1 513.5,627.8 507.5,632.5 502.2,628.8" fill="#66ccff" stroke="#000" stroke-width="0.65" stroke-linejoin="round" />
<polygon points="515.8,631.0 523.1,636.0 513.9,643.2 506.7,638.2" fill="#346484" stroke="#000" stroke-width="0.65" stroke-linejoin="round" />
<polygon points="506.7,638.2 513.9,643.2 515.4,637.9 510.1,634.3" fill="#346484" stroke="#000" stroke-width="0.65" stroke-linejoin="round" />
<polygon points="523.1,636.0 513.9,643.2 515.4,637.9 521.4,633.2" fill="#2a5470" stroke="#000" stroke-width="0.65" stroke-linejoin="round" />
<polygon points="515.8,631.0 506.7,638.2 510.1,634.3 516.0,629.5" fill="#3f7aa2" stroke="#000" stroke-width="0.4" stroke-linejoin="round" />
<polygon points="516.0,629.5 521.4,633.2 515.4,637.9 510.1,634.3" fill="#66ccff" stroke="#000" stroke-width="0.65" stroke-linejoin="round" />
<polygon points="523.7,636.4 531.0,641.4 521.8,648.6 514.6,643.6" fill="#346484" stroke="#000" stroke-width="0.65" stroke-linejoin="round" />
<polygon points="514.6,643.6 521.8,648.6 523.3,643.4 517.9,639.7" fill="#346484" stroke="#000" stroke-width="0.65" stroke-linejoin="round" />
<polygon points="531.0,641.4 521.8,648.6 523.3,643.4 529.3,638.7" fill="#2a5470" stroke="#000" stroke-width="0.65" stroke-linejoin="round" />
<polygon points="523.7,636.4 514.6,643.6 517.9,639.7 523.9,635.0" fill="#3f7aa2" stroke="#000" stroke-width="0.4" stroke-linejoin="round" />
<polygon points="523.9,635.0 529.3,638.7 523.3,643.4 517.9,639.7" fill="#66ccff" stroke="#000" stroke-width="0.65" stroke-linejoin="round" />
<polygon points="531.7,641.9 538.9,646.9 529.7,654.1 522.5,649.1" fill="#346484" stroke="#000" stroke-width="0.65" stroke-linejoin="round" />
<polygon points="522.5,649.1 529.7,654.1 531.2,648.9 525.9,645.2" fill="#346484" stroke="#000" stroke-width="0.65" stroke-linejoin="round" />
<polygon points="538.9,646.9 529.7,654.1 531.2,648.9 537.2,644.1" fill="#2a5470" stroke="#000" stroke-width="0.65" stroke-linejoin="round" />
<polygon points="531.7,641.9 522.5,649.1 525.9,645.2 531.9,640.4" fill="#3f7aa2" stroke="#000" stroke-width="0.4" stroke-linejoin="round" />
<polygon points="531.9,640.4 537.2,644.1 531.2,648.9 525.9,645.2" fill="#66ccff" stroke="#000" stroke-width="0.65" stroke-linejoin="round" />
<polygon points="539.6,647.4 546.9,652.4 537.7,659.6 530.4,654.6" fill="#346484" stroke="#000" stroke-width="0.65" stroke-linejoin="round" />
<polygon points="530.4,654.6 537.7,659.6 539.2,654.4 533.8,650.7" fill="#346484" stroke="#000" stroke-width="0.65" stroke-linejoin="round" />
<polygon points="546.9,652.4 537.7,659.6 539.2,654.4 545.2,649.6" fill="#2a5470" stroke="#000" stroke-width="0.65" stroke-linejoin="round" />
<polygon points="539.6,647.4 530.4,654.6 533.8,650.7 539.8,645.9" fill="#3f7aa2" stroke="#000" stroke-width="0.4" stroke-linejoin="round" />
<polygon points="539.8,645.9 545.2,649.6 539.2,654.4 533.8,650.7" fill="#66ccff" stroke="#000" stroke-width="0.65" stroke-linejoin="round" />
<polygon points="547.6,652.9 554.9,657.9 545.7,665.2 538.4,660.1" fill="#346484" stroke="#000" stroke-width="0.65" stroke-linejoin="round" />
<polygon points="538.4,660.1 545.7,665.2 547.2,659.9 541.8,656.2" fill="#346484" stroke="#000" stroke-width="0.65" stroke-linejoin="round" />
<polygon points="554.9,657.9 545.7,665.2 547.2,659.9 553.2,655.1" fill="#2a5470" stroke="#000" stroke-width="0.65" stroke-linejoin="round" />
<polygon points="547.6,652.9 538.4,660.1 541.8,656.2 547.8,651.4" fill="#3f7aa2" stroke="#000" stroke-width="0.4" stroke-linejoin="round" />
<polygon points="547.8,651.4 553.2,655.1 547.2,659.9 541.8,656.2" fill="#66ccff" stroke="#000" stroke-width="0.65" stroke-linejoin="round" />
<polygon points="555.6,658.4 562.9,663.4 553.7,670.7 546.4,665.6" fill="#346484" stroke="#000" stroke-width="0.65" stroke-linejoin="round" />
<polygon points="546.4,665.6 553.7,670.7 555.2,665.4 549.8,661.7" fill="#346484" stroke="#000" stroke-width="0.65" stroke-linejoin="round" />
<polygon points="562.9,663.4 553.7,670.7 555.2,665.4 561.2,660.7" fill="#2a5470" stroke="#000" stroke-width="0.65" stroke-linejoin="round" />
<polygon points="555.6,658.4 546.4,665.6 549.8,661.7 555.8,656.9" fill="#3f7aa2" stroke="#000" stroke-width="0.4" stroke-linejoin="round" />
<polygon points="555.8,656.9 561.2,660.7 555.2,665.4 549.8,661.7" fill="#66ccff" stroke="#000" stroke-width="0.65" stroke-linejoin="round" />
<polygon points="563.6,663.9 571.0,669.0 561.7,676.3 554.4,671.2" fill="#346484" stroke="#000" stroke-width="0.65" stroke-linejoin="round" />
<polygon points="554.4,671.2 561.7,676.3 563.2,671.0 557.8,667.2" fill="#346484" stroke="#000" stroke-width="0.65" stroke-linejoin="round" />
<polygon points="571.0,669.0 561.7,676.3 563.2,671.0 569.3,666.2" fill="#2a5470" stroke="#000" stroke-width="0.65" stroke-linejoin="round" />
<polygon points="563.6,663.9 554.4,671.2 557.8,667.2 563.8,662.5" fill="#3f7aa2" stroke="#000" stroke-width="0.4" stroke-linejoin="round" />
<polygon points="563.8,662.5 569.3,666.2 563.2,671.0 557.8,667.2" fill="#66ccff" stroke="#000" stroke-width="0.65" stroke-linejoin="round" />
<polygon points="571.7,669.5 579.1,674.6 569.8,681.9 562.4,676.7" fill="#346484" stroke="#000" stroke-width="0.65" stroke-linejoin="round" />
<polygon points="562.4,676.7 569.8,681.9 571.3,676.6 565.8,672.8" fill="#346484" stroke="#000" stroke-width="0.65" stroke-linejoin="round" />
<polygon points="579.1,674.6 569.8,681.9 571.3,676.6 577.3,671.8" fill="#2a5470" stroke="#000" stroke-width="0.65" stroke-linejoin="round" />
<polygon points="571.7,669.5 562.4,676.7 565.8,672.8 571.9,668.0" fill="#3f7aa2" stroke="#000" stroke-width="0.4" stroke-linejoin="round" />
<polygon points="571.9,668.0 577.3,671.8 571.3,676.6 565.8,672.8" fill="#66ccff" stroke="#000" stroke-width="0.65" stroke-linejoin="round" />
<polygon points="579.8,675.0 587.2,680.2 577.9,687.5 570.5,682.3" fill="#346484" stroke="#000" stroke-width="0.65" stroke-linejoin="round" />
<polygon points="570.5,682.3 577.9,687.5 579.4,682.2 573.9,678.4" fill="#346484" stroke="#000" stroke-width="0.65" stroke-linejoin="round" />
<polygon points="587.2,680.2 577.9,687.5 579.4,682.2 585.5,677.4" fill="#2a5470" stroke="#000" stroke-width="0.65" stroke-linejoin="round" />
<polygon points="579.8,675.0 570.5,682.3 573.9,678.4 580.0,673.6" fill="#3f7aa2" stroke="#000" stroke-width="0.4" stroke-linejoin="round" />
<polygon points="580.0,673.6 585.5,677.4 579.4,682.2 573.9,678.4" fill="#66ccff" stroke="#000" stroke-width="0.65" stroke-linejoin="round" />
<polygon points="587.9,680.6 597.2,687.0 587.9,694.3 578.6,687.9" fill="#346484" stroke="#000" stroke-width="0.65" stroke-linejoin="round" />
<polygon points="578.6,687.9 587.9,694.3 589.3,689.0 582.0,684.0" fill="#346484" stroke="#000" stroke-width="0.65" stroke-linejoin="round" />
<polygon points="597.2,687.0 587.9,694.3 589.3,689.0 595.4,684.3" fill="#2a5470" stroke="#000" stroke-width="0.65" stroke-linejoin="round" />
<polygon points="587.9,680.6 578.6,687.9 582.0,684.0 588.1,679.2" fill="#3f7aa2" stroke="#000" stroke-width="0.4" stroke-linejoin="round" />
<polygon points="588.1,679.2 595.4,684.3 589.3,689.0 582.0,684.0" fill="#66ccff" stroke="#000" stroke-width="0.65" stroke-linejoin="round" />
<polygon points="470.4,613.8 477.4,618.7 468.3,625.9 461.3,621.0" fill="#346484" stroke="#000" stroke-width="0.65" stroke-linejoin="round" />
<polygon points="461.3,621.0 468.3,625.9 469.8,620.6 464.7,617.1" fill="#346484" stroke="#000" stroke-width="0.65" stroke-linejoin="round" />
<polygon points="477.4,618.7 468.3,625.9 469.8,620.6 475.7,615.9" fill="#2a5470" stroke="#000" stroke-width="0.65" stroke-linejoin="round" />
<polygon points="470.4,613.8 461.3,621.0 464.7,617.1 470.6,612.4" fill="#3f7aa2" stroke="#000" stroke-width="0.4" stroke-linejoin="round" />
<polygon points="470.6,612.4 475.7,615.9 469.8,620.6 464.7,617.1" fill="#66ccff" stroke="#000" stroke-width="0.65" stroke-linejoin="round" />
<polygon points="478.0,619.1 485.1,624.1 476.1,631.2 469.0,626.3" fill="#346484" stroke="#000" stroke-width="0.65" stroke-linejoin="round" />
<polygon points="469.0,626.3 476.1,631.2 477.5,626.0 472.3,622.4" fill="#346484" stroke="#000" stroke-width="0.65" stroke-linejoin="round" />
<polygon points="485.1,624.1 476.1,631.2 477.5,626.0 483.5,621.3" fill="#2a5470" stroke="#000" stroke-width="0.65" stroke-linejoin="round" />
<polygon points="478.0,619.1 469.0,626.3 472.3,622.4 478.2,617.7" fill="#3f7aa2" stroke="#000" stroke-width="0.4" stroke-linejoin="round" />
<polygon points="478.2,617.7 483.5,621.3 477.5,626.0 472.3,622.4" fill="#66ccff" stroke="#000" stroke-width="0.65" stroke-linejoin="round" />
<polygon points="485.8,624.5 492.9,629.5 483.9,636.6 476.7,631.7" fill="#346484" stroke="#000" stroke-width="0.65" stroke-linejoin="round" />
<polygon points="476.7,631.7 483.9,636.6 485.3,631.4 480.1,627.7" fill="#346484" stroke="#000" stroke-width="0.65" stroke-linejoin="round" />
<polygon points="492.9,629.5 483.9,636.6 485.3,631.4 491.3,626.7" fill="#2a5470" stroke="#000" stroke-width="0.65" stroke-linejoin="round" />
<polygon points="485.8,624.5 476.7,631.7 480.1,627.7 486.0,623.1" fill="#3f7aa2" stroke="#000" stroke-width="0.4" stroke-linejoin="round" />
<polygon points="486.0,623.1 491.3,626.7 485.3,631.4 480.1,627.7" fill="#66ccff" stroke="#000" stroke-width="0.65" stroke-linejoin="round" />
<polygon points="493.6,629.9 500.8,634.9 491.7,642.1 484.5,637.1" fill="#346484" stroke="#000" stroke-width="0.65" stroke-linejoin="round" />
<polygon points="484.5,637.1 491.7,642.1 493.1,636.8 487.8,633.2" fill="#346484" stroke="#000" stroke-width="0.65" stroke-linejoin="round" />
<polygon points="500.8,634.9 491.7,642.1 493.1,636.8 499.1,632.1" fill="#2a5470" stroke="#000" stroke-width="0.65" stroke-linejoin="round" />
<polygon points="493.6,629.9 484.5,637.1 487.8,633.2 493.8,628.5" fill="#3f7aa2" stroke="#000" stroke-width="0.4" stroke-linejoin="round" />
<polygon points="493.8,628.5 499.1,632.1 493.1,636.8 487.8,633.2" fill="#66ccff" stroke="#000" stroke-width="0.65" stroke-linejoin="round" />
<polygon points="501.4,635.3 508.6,640.3 499.5,647.5 492.3,642.5" fill="#346484" stroke="#000" stroke-width="0.65" stroke-linejoin="round" />
<polygon points="492.3,642.5 499.5,647.5 501.0,642.3 495.7,638.6" fill="#346484" stroke="#000" stroke-width="0.65" stroke-linejoin="round" />
<polygon points="508.6,640.3 499.5,647.5 501.0,642.3 506.9,637.5" fill="#2a5470" stroke="#000" stroke-width="0.65" stroke-linejoin="round" />
<polygon points="501.4,635.3 492.3,642.5 495.7,638.6 501.6,633.9" fill="#3f7aa2" stroke="#000" stroke-width="0.4" stroke-linejoin="round" />
<polygon points="501.6,633.9 506.9,637.5 501.0,642.3 495.7,638.6" fill="#66ccff" stroke="#000" stroke-width="0.65" stroke-linejoin="round" />
<polygon points="509.3,640.8 516.5,645.8 507.4,653.0 500.2,648.0" fill="#346484" stroke="#000" stroke-width="0.65" stroke-linejoin="round" />
<polygon points="500.2,648.0 507.4,653.0 508.8,647.7 503.5,644.0" fill="#346484" stroke="#000" stroke-width="0.65" stroke-linejoin="round" />
<polygon points="516.5,645.8 507.4,653.0 508.8,647.7 514.8,643.0" fill="#2a5470" stroke="#000" stroke-width="0.65" stroke-linejoin="round" />
<polygon points="509.3,640.8 500.2,648.0 503.5,644.0 509.5,639.3" fill="#3f7aa2" stroke="#000" stroke-width="0.4" stroke-linejoin="round" />
<polygon points="509.5,639.3 514.8,643.0 508.8,647.7 503.5,644.0" fill="#66ccff" stroke="#000" stroke-width="0.65" stroke-linejoin="round" />
<polygon points="517.2,646.2 524.4,651.2 515.3,658.5 508.0,653.4" fill="#346484" stroke="#000" stroke-width="0.65" stroke-linejoin="round" />
<polygon points="508.0,653.4 515.3,658.5 516.7,653.2 511.4,649.5" fill="#346484" stroke="#000" stroke-width="0.65" stroke-linejoin="round" />
<polygon points="524.4,651.2 515.3,658.5 516.7,653.2 522.7,648.5" fill="#2a5470" stroke="#000" stroke-width="0.65" stroke-linejoin="round" />
<polygon points="517.2,646.2 508.0,653.4 511.4,649.5 517.4,644.8" fill="#3f7aa2" stroke="#000" stroke-width="0.4" stroke-linejoin="round" />
<polygon points="517.4,644.8 522.7,648.5 516.7,653.2 511.4,649.5" fill="#66ccff" stroke="#000" stroke-width="0.65" stroke-linejoin="round" />
<polygon points="525.1,651.7 532.4,656.7 523.2,664.0 515.9,658.9" fill="#346484" stroke="#000" stroke-width="0.65" stroke-linejoin="round" />
<polygon points="515.9,658.9 523.2,664.0 524.6,658.7 519.3,655.0" fill="#346484" stroke="#000" stroke-width="0.65" stroke-linejoin="round" />
<polygon points="532.4,656.7 523.2,664.0 524.6,658.7 530.6,654.0" fill="#2a5470" stroke="#000" stroke-width="0.65" stroke-linejoin="round" />
<polygon points="525.1,651.7 515.9,658.9 519.3,655.0 525.3,650.3" fill="#3f7aa2" stroke="#000" stroke-width="0.4" stroke-linejoin="round" />
<polygon points="525.3,650.3 530.6,654.0 524.6,658.7 519.3,655.0" fill="#66ccff" stroke="#000" stroke-width="0.65" stroke-linejoin="round" />
<polygon points="533.0,657.2 540.3,662.3 531.1,669.5 523.8,664.4" fill="#346484" stroke="#000" stroke-width="0.65" stroke-linejoin="round" />
<polygon points="523.8,664.4 531.1,669.5 532.6,664.2 527.2,660.5" fill="#346484" stroke="#000" stroke-width="0.65" stroke-linejoin="round" />
<polygon points="540.3,662.3 531.1,669.5 532.6,664.2 538.6,659.5" fill="#2a5470" stroke="#000" stroke-width="0.65" stroke-linejoin="round" />
<polygon points="533.0,657.2 523.8,664.4 527.2,660.5 533.2,655.8" fill="#3f7aa2" stroke="#000" stroke-width="0.4" stroke-linejoin="round" />
<polygon points="533.2,655.8 538.6,659.5 532.6,664.2 527.2,660.5" fill="#66ccff" stroke="#000" stroke-width="0.65" stroke-linejoin="round" />
<polygon points="541.0,662.7 548.3,667.8 539.1,675.0 531.8,670.0" fill="#346484" stroke="#000" stroke-width="0.65" stroke-linejoin="round" />
<polygon points="531.8,670.0 539.1,675.0 540.6,669.8 535.2,666.0" fill="#346484" stroke="#000" stroke-width="0.65" stroke-linejoin="round" />
<polygon points="548.3,667.8 539.1,675.0 540.6,669.8 546.6,665.0" fill="#2a5470" stroke="#000" stroke-width="0.65" stroke-linejoin="round" />
<polygon points="541.0,662.7 531.8,670.0 535.2,666.0 541.2,661.3" fill="#3f7aa2" stroke="#000" stroke-width="0.4" stroke-linejoin="round" />
<polygon points="541.2,661.3 546.6,665.0 540.6,669.8 535.2,666.0" fill="#66ccff" stroke="#000" stroke-width="0.65" stroke-linejoin="round" />
<polygon points="549.0,668.3 556.3,673.3 547.1,680.6 539.8,675.5" fill="#346484" stroke="#000" stroke-width="0.65" stroke-linejoin="round" />
<polygon points="539.8,675.5 547.1,680.6 548.6,675.3 543.2,671.6" fill="#346484" stroke="#000" stroke-width="0.65" stroke-linejoin="round" />
<polygon points="556.3,673.3 547.1,680.6 548.6,675.3 554.6,670.6" fill="#2a5470" stroke="#000" stroke-width="0.65" stroke-linejoin="round" />
<polygon points="549.0,668.3 539.8,675.5 543.2,671.6 549.2,666.8" fill="#3f7aa2" stroke="#000" stroke-width="0.4" stroke-linejoin="round" />
<polygon points="549.2,666.8 554.6,670.6 548.6,675.3 543.2,671.6" fill="#66ccff" stroke="#000" stroke-width="0.65" stroke-linejoin="round" />
<polygon points="557.0,673.8 564.4,678.9 555.1,686.2 547.8,681.1" fill="#346484" stroke="#000" stroke-width="0.65" stroke-linejoin="round" />
<polygon points="547.8,681.1 555.1,686.2 556.6,680.9 551.2,677.1" fill="#346484" stroke="#000" stroke-width="0.65" stroke-linejoin="round" />
<polygon points="564.4,678.9 555.1,686.2 556.6,680.9 562.7,676.1" fill="#2a5470" stroke="#000" stroke-width="0.65" stroke-linejoin="round" />
<polygon points="557.0,673.8 547.8,681.1 551.2,677.1 557.2,672.4" fill="#3f7aa2" stroke="#000" stroke-width="0.4" stroke-linejoin="round" />
<polygon points="557.2,672.4 562.7,676.1 556.6,680.9 551.2,677.1" fill="#66ccff" stroke="#000" stroke-width="0.65" stroke-linejoin="round" />
<polygon points="565.1,679.4 572.5,684.5 563.2,691.8 555.8,686.7" fill="#346484" stroke="#000" stroke-width="0.65" stroke-linejoin="round" />
<polygon points="555.8,686.7 563.2,691.8 564.7,686.5 559.2,682.7" fill="#346484" stroke="#000" stroke-width="0.65" stroke-linejoin="round" />
<polygon points="572.5,684.5 563.2,691.8 564.7,686.5 570.7,681.7" fill="#2a5470" stroke="#000" stroke-width="0.65" stroke-linejoin="round" />
<polygon points="565.1,679.4 555.8,686.7 559.2,682.7 565.3,678.0" fill="#3f7aa2" stroke="#000" stroke-width="0.4" stroke-linejoin="round" />
<polygon points="565.3,678.0 570.7,681.7 564.7,686.5 559.2,682.7" fill="#66ccff" stroke="#000" stroke-width="0.65" stroke-linejoin="round" />
<polygon points="573.2,685.0 580.6,690.1 571.3,697.4 563.9,692.3" fill="#346484" stroke="#000" stroke-width="0.65" stroke-linejoin="round" />
<polygon points="563.9,692.3 571.3,697.4 572.8,692.1 567.3,688.3" fill="#346484" stroke="#000" stroke-width="0.65" stroke-linejoin="round" />
<polygon points="580.6,690.1 571.3,697.4 572.8,692.1 578.8,687.3" fill="#2a5470" stroke="#000" stroke-width="0.65" stroke-linejoin="round" />
<polygon points="573.2,685.0 563.9,692.3 567.3,688.3 573.4,683.6" fill="#3f7aa2" stroke="#000" stroke-width="0.4" stroke-linejoin="round" />
<polygon points="573.4,683.6 578.8,687.3 572.8,692.1 567.3,688.3" fill="#66ccff" stroke="#000" stroke-width="0.65" stroke-linejoin="round" />
<polygon points="581.3,690.6 587.3,694.8 578.0,702.1 572.0,697.9" fill="#346484" stroke="#000" stroke-width="0.65" stroke-linejoin="round" />
<polygon points="572.0,697.9 578.0,702.1 579.5,696.8 575.4,694.0" fill="#346484" stroke="#000" stroke-width="0.65" stroke-linejoin="round" />
<polygon points="587.3,694.8 578.0,702.1 579.5,696.8 585.6,692.0" fill="#2a5470" stroke="#000" stroke-width="0.65" stroke-linejoin="round" />
<polygon points="581.3,690.6 572.0,697.9 575.4,694.0 581.5,689.2" fill="#3f7aa2" stroke="#000" stroke-width="0.4" stroke-linejoin="round" />
<polygon points="581.5,689.2 585.6,692.0 579.5,696.8 575.4,694.0" fill="#66ccff" stroke="#000" stroke-width="0.65" stroke-linejoin="round" />
<polygon points="460.8,621.4 476.4,632.2 467.3,639.4 451.8,628.6" fill="#346484" stroke="#000" stroke-width="0.65" stroke-linejoin="round" />
<polygon points="451.8,628.6 467.3,639.4 468.8,634.2 455.1,624.6" fill="#346484" stroke="#000" stroke-width="0.65" stroke-linejoin="round" />
<polygon points="476.4,632.2 467.3,639.4 468.8,634.2 474.7,629.5" fill="#2a5470" stroke="#000" stroke-width="0.65" stroke-linejoin="round" />
<polygon points="460.8,621.4 451.8,628.6 455.1,624.6 461.0,619.9" fill="#3f7aa2" stroke="#000" stroke-width="0.4" stroke-linejoin="round" />
<polygon points="461.0,619.9 474.7,629.5 468.8,634.2 455.1,624.6" fill="#66ccff" stroke="#000" stroke-width="0.65" stroke-linejoin="round" />
<polygon points="477.0,632.7 484.1,637.6 475.1,644.8 467.9,639.8" fill="#346484" stroke="#000" stroke-width="0.65" stroke-linejoin="round" />
<polygon points="467.9,639.8 475.1,644.8 476.5,639.6 471.3,635.9" fill="#346484" stroke="#000" stroke-width="0.65" stroke-linejoin="round" />
<polygon points="484.1,637.6 475.1,644.8 476.5,639.6 482.5,634.9" fill="#2a5470" stroke="#000" stroke-width="0.65" stroke-linejoin="round" />
<polygon points="477.0,632.7 467.9,639.8 471.3,635.9 477.2,631.2" fill="#3f7aa2" stroke="#000" stroke-width="0.4" stroke-linejoin="round" />
<polygon points="477.2,631.2 482.5,634.9 476.5,639.6 471.3,635.9" fill="#66ccff" stroke="#000" stroke-width="0.65" stroke-linejoin="round" />
<polygon points="484.8,638.1 492.0,643.1 482.9,650.3 475.7,645.3" fill="#346484" stroke="#000" stroke-width="0.65" stroke-linejoin="round" />
<polygon points="475.7,645.3 482.9,650.3 484.3,645.0 479.1,641.3" fill="#346484" stroke="#000" stroke-width="0.65" stroke-linejoin="round" />
<polygon points="492.0,643.1 482.9,650.3 484.3,645.0 490.3,640.3" fill="#2a5470" stroke="#000" stroke-width="0.65" stroke-linejoin="round" />
<polygon points="484.8,638.1 475.7,645.3 479.1,641.3 485.0,636.6" fill="#3f7aa2" stroke="#000" stroke-width="0.4" stroke-linejoin="round" />
<polygon points="485.0,636.6 490.3,640.3 484.3,645.0 479.1,641.3" fill="#66ccff" stroke="#000" stroke-width="0.65" stroke-linejoin="round" />
<polygon points="492.6,643.5 499.8,648.5 490.7,655.7 483.5,650.7" fill="#346484" stroke="#000" stroke-width="0.65" stroke-linejoin="round" />
<polygon points="483.5,650.7 490.7,655.7 492.1,650.5 486.9,646.8" fill="#346484" stroke="#000" stroke-width="0.65" stroke-linejoin="round" />
<polygon points="499.8,648.5 490.7,655.7 492.1,650.5 498.1,645.8" fill="#2a5470" stroke="#000" stroke-width="0.65" stroke-linejoin="round" />
<polygon points="492.6,643.5 483.5,650.7 486.9,646.8 492.8,642.1" fill="#3f7aa2" stroke="#000" stroke-width="0.4" stroke-linejoin="round" />
<polygon points="492.8,642.1 498.1,645.8 492.1,650.5 486.9,646.8" fill="#66ccff" stroke="#000" stroke-width="0.65" stroke-linejoin="round" />
<polygon points="500.5,649.0 507.7,654.0 498.5,661.2 491.3,656.2" fill="#346484" stroke="#000" stroke-width="0.65" stroke-linejoin="round" />
<polygon points="491.3,656.2 498.5,661.2 500.0,655.9 494.7,652.2" fill="#346484" stroke="#000" stroke-width="0.65" stroke-linejoin="round" />
<polygon points="507.7,654.0 498.5,661.2 500.0,655.9 506.0,651.2" fill="#2a5470" stroke="#000" stroke-width="0.65" stroke-linejoin="round" />
<polygon points="500.5,649.0 491.3,656.2 494.7,652.2 500.7,647.5" fill="#3f7aa2" stroke="#000" stroke-width="0.4" stroke-linejoin="round" />
<polygon points="500.7,647.5 506.0,651.2 500.0,655.9 494.7,652.2" fill="#66ccff" stroke="#000" stroke-width="0.65" stroke-linejoin="round" />
<polygon points="508.3,654.5 515.6,659.5 506.4,666.7 499.2,661.7" fill="#346484" stroke="#000" stroke-width="0.65" stroke-linejoin="round" />
<polygon points="499.2,661.7 506.4,666.7 507.9,661.4 502.5,657.7" fill="#346484" stroke="#000" stroke-width="0.65" stroke-linejoin="round" />
<polygon points="515.6,659.5 506.4,666.7 507.9,661.4 513.8,656.7" fill="#2a5470" stroke="#000" stroke-width="0.65" stroke-linejoin="round" />
<polygon points="508.3,654.5 499.2,661.7 502.5,657.7 508.5,653.0" fill="#3f7aa2" stroke="#000" stroke-width="0.4" stroke-linejoin="round" />
<polygon points="508.5,653.0 513.8,656.7 507.9,661.4 502.5,657.7" fill="#66ccff" stroke="#000" stroke-width="0.65" stroke-linejoin="round" />
<polygon points="516.2,659.9 523.5,665.0 514.3,672.2 507.1,667.2" fill="#346484" stroke="#000" stroke-width="0.65" stroke-linejoin="round" />
<polygon points="507.1,667.2 514.3,672.2 515.8,666.9 510.4,663.2" fill="#346484" stroke="#000" stroke-width="0.65" stroke-linejoin="round" />
<polygon points="523.5,665.0 514.3,672.2 515.8,666.9 521.8,662.2" fill="#2a5470" stroke="#000" stroke-width="0.65" stroke-linejoin="round" />
<polygon points="516.2,659.9 507.1,667.2 510.4,663.2 516.4,658.5" fill="#3f7aa2" stroke="#000" stroke-width="0.4" stroke-linejoin="round" />
<polygon points="516.4,658.5 521.8,662.2 515.8,666.9 510.4,663.2" fill="#66ccff" stroke="#000" stroke-width="0.65" stroke-linejoin="round" />
<polygon points="524.1,665.5 531.4,670.5 522.2,677.8 515.0,672.7" fill="#346484" stroke="#000" stroke-width="0.65" stroke-linejoin="round" />
<polygon points="515.0,672.7 522.2,677.8 523.7,672.5 518.3,668.7" fill="#346484" stroke="#000" stroke-width="0.65" stroke-linejoin="round" />
<polygon points="531.4,670.5 522.2,677.8 523.7,672.5 529.7,667.7" fill="#2a5470" stroke="#000" stroke-width="0.65" stroke-linejoin="round" />
<polygon points="524.1,665.5 515.0,672.7 518.3,668.7 524.4,664.0" fill="#3f7aa2" stroke="#000" stroke-width="0.4" stroke-linejoin="round" />
<polygon points="524.4,664.0 529.7,667.7 523.7,672.5 518.3,668.7" fill="#66ccff" stroke="#000" stroke-width="0.65" stroke-linejoin="round" />
<polygon points="532.1,671.0 539.4,676.1 530.2,683.3 522.9,678.2" fill="#346484" stroke="#000" stroke-width="0.65" stroke-linejoin="round" />
<polygon points="522.9,678.2 530.2,683.3 531.7,678.0 526.3,674.3" fill="#346484" stroke="#000" stroke-width="0.65" stroke-linejoin="round" />
<polygon points="539.4,676.1 530.2,683.3 531.7,678.0 537.7,673.3" fill="#2a5470" stroke="#000" stroke-width="0.65" stroke-linejoin="round" />
<polygon points="532.1,671.0 522.9,678.2 526.3,674.3 532.3,669.5" fill="#3f7aa2" stroke="#000" stroke-width="0.4" stroke-linejoin="round" />
<polygon points="532.3,669.5 537.7,673.3 531.7,678.0 526.3,674.3" fill="#66ccff" stroke="#000" stroke-width="0.65" stroke-linejoin="round" />
<polygon points="540.1,676.5 547.4,681.6 538.2,688.9 530.9,683.8" fill="#346484" stroke="#000" stroke-width="0.65" stroke-linejoin="round" />
<polygon points="530.9,683.8 538.2,688.9 539.6,683.6 534.3,679.8" fill="#346484" stroke="#000" stroke-width="0.65" stroke-linejoin="round" />
<polygon points="547.4,681.6 538.2,688.9 539.6,683.6 545.7,678.9" fill="#2a5470" stroke="#000" stroke-width="0.65" stroke-linejoin="round" />
<polygon points="540.1,676.5 530.9,683.8 534.3,679.8 540.3,675.1" fill="#3f7aa2" stroke="#000" stroke-width="0.4" stroke-linejoin="round" />
<polygon points="540.3,675.1 545.7,678.9 539.6,683.6 534.3,679.8" fill="#66ccff" stroke="#000" stroke-width="0.65" stroke-linejoin="round" />
<polygon points="548.1,682.1 555.4,687.2 546.2,694.5 538.9,689.4" fill="#346484" stroke="#000" stroke-width="0.65" stroke-linejoin="round" />
<polygon points="538.9,689.4 546.2,694.5 547.7,689.2 542.3,685.4" fill="#346484" stroke="#000" stroke-width="0.65" stroke-linejoin="round" />
<polygon points="555.4,687.2 546.2,694.5 547.7,689.2 553.7,684.4" fill="#2a5470" stroke="#000" stroke-width="0.65" stroke-linejoin="round" />
<polygon points="548.1,682.1 538.9,689.4 542.3,685.4 548.3,680.7" fill="#3f7aa2" stroke="#000" stroke-width="0.4" stroke-linejoin="round" />
<polygon points="548.3,680.7 553.7,684.4 547.7,689.2 542.3,685.4" fill="#66ccff" stroke="#000" stroke-width="0.65" stroke-linejoin="round" />
<polygon points="556.1,687.7 563.5,692.8 554.2,700.1 546.9,695.0" fill="#346484" stroke="#000" stroke-width="0.65" stroke-linejoin="round" />
<polygon points="546.9,695.0 554.2,700.1 555.7,694.8 550.3,691.0" fill="#346484" stroke="#000" stroke-width="0.65" stroke-linejoin="round" />
<polygon points="563.5,692.8 554.2,700.1 555.7,694.8 561.8,690.0" fill="#2a5470" stroke="#000" stroke-width="0.65" stroke-linejoin="round" />
<polygon points="556.1,687.7 546.9,695.0 550.3,691.0 556.3,686.3" fill="#3f7aa2" stroke="#000" stroke-width="0.4" stroke-linejoin="round" />
<polygon points="556.3,686.3 561.8,690.0 555.7,694.8 550.3,691.0" fill="#66ccff" stroke="#000" stroke-width="0.65" stroke-linejoin="round" />
<polygon points="564.2,693.3 571.6,698.5 562.3,705.8 554.9,700.6" fill="#346484" stroke="#000" stroke-width="0.65" stroke-linejoin="round" />
<polygon points="554.9,700.6 562.3,705.8 563.8,700.4 558.3,696.6" fill="#346484" stroke="#000" stroke-width="0.65" stroke-linejoin="round" />
<polygon points="571.6,698.5 562.3,705.8 563.8,700.4 569.9,695.7" fill="#2a5470" stroke="#000" stroke-width="0.65" stroke-linejoin="round" />
<polygon points="564.2,693.3 554.9,700.6 558.3,696.6 564.4,691.9" fill="#3f7aa2" stroke="#000" stroke-width="0.4" stroke-linejoin="round" />
<polygon points="564.4,691.9 569.9,695.7 563.8,700.4 558.3,696.6" fill="#66ccff" stroke="#000" stroke-width="0.65" stroke-linejoin="round" />
<polygon points="461.6,636.2 468.7,641.1 459.6,648.3 452.6,643.4" fill="#346484" stroke="#000" stroke-width="0.65" stroke-linejoin="round" />
<polygon points="452.6,643.4 459.6,648.3 461.0,643.1 455.9,639.5" fill="#346484" stroke="#000" stroke-width="0.65" stroke-linejoin="round" />
<polygon points="468.7,641.1 459.6,648.3 461.0,643.1 467.0,638.4" fill="#2a5470" stroke="#000" stroke-width="0.65" stroke-linejoin="round" />
<polygon points="461.6,636.2 452.6,643.4 455.9,639.5 461.8,634.8" fill="#3f7aa2" stroke="#000" stroke-width="0.4" stroke-linejoin="round" />
<polygon points="461.8,634.8 467.0,638.4 461.0,643.1 455.9,639.5" fill="#66ccff" stroke="#000" stroke-width="0.65" stroke-linejoin="round" />
<polygon points="469.4,641.7 476.5,646.6 467.4,653.8 460.4,648.8" fill="#346484" stroke="#000" stroke-width="0.65" stroke-linejoin="round" />
<polygon points="460.4,648.8 467.4,653.8 468.8,648.5 463.7,644.9" fill="#346484" stroke="#000" stroke-width="0.65" stroke-linejoin="round" />
<polygon points="476.5,646.6 467.4,653.8 468.8,648.5 474.8,643.8" fill="#2a5470" stroke="#000" stroke-width="0.65" stroke-linejoin="round" />
<polygon points="469.4,641.7 460.4,648.8 463.7,644.9 469.6,640.2" fill="#3f7aa2" stroke="#000" stroke-width="0.4" stroke-linejoin="round" />
<polygon points="469.6,640.2 474.8,643.8 468.8,648.5 463.7,644.9" fill="#66ccff" stroke="#000" stroke-width="0.65" stroke-linejoin="round" />
<polygon points="478.0,647.7 538.4,689.9 529.2,697.1 469.0,654.9" fill="#346484" stroke="#000" stroke-width="0.65" stroke-linejoin="round" />
<polygon points="469.0,654.9 529.2,697.1 530.7,691.8 472.3,650.9" fill="#346484" stroke="#000" stroke-width="0.65" stroke-linejoin="round" />
<polygon points="538.4,689.9 529.2,697.1 530.7,691.8 536.7,687.1" fill="#2a5470" stroke="#000" stroke-width="0.65" stroke-linejoin="round" />
<polygon points="478.0,647.7 469.0,654.9 472.3,650.9 478.2,646.2" fill="#3f7aa2" stroke="#000" stroke-width="0.4" stroke-linejoin="round" />
<polygon points="478.2,646.2 536.7,687.1 530.7,691.8 472.3,650.9" fill="#66ccff" stroke="#000" stroke-width="0.65" stroke-linejoin="round" />
<polygon points="540.0,691.0 549.7,697.8 540.5,705.0 530.8,698.3" fill="#346484" stroke="#000" stroke-width="0.65" stroke-linejoin="round" />
<polygon points="530.8,698.3 540.5,705.0 541.9,699.8 534.2,694.3" fill="#346484" stroke="#000" stroke-width="0.65" stroke-linejoin="round" />
<polygon points="549.7,697.8 540.5,705.0 541.9,699.8 548.0,695.0" fill="#2a5470" stroke="#000" stroke-width="0.65" stroke-linejoin="round" />
<polygon points="540.0,691.0 530.8,698.3 534.2,694.3 540.2,689.6" fill="#3f7aa2" stroke="#000" stroke-width="0.4" stroke-linejoin="round" />
<polygon points="540.2,689.6 548.0,695.0 541.9,699.8 534.2,694.3" fill="#66ccff" stroke="#000" stroke-width="0.65" stroke-linejoin="round" />
<polygon points="551.3,698.9 561.9,706.3 552.6,713.6 542.1,706.2" fill="#346484" stroke="#000" stroke-width="0.65" stroke-linejoin="round" />
<polygon points="542.1,706.2 552.6,713.6 554.1,708.3 545.5,702.2" fill="#346484" stroke="#000" stroke-width="0.65" stroke-linejoin="round" />
<polygon points="561.9,706.3 552.6,713.6 554.1,708.3 560.2,703.5" fill="#2a5470" stroke="#000" stroke-width="0.65" stroke-linejoin="round" />
<polygon points="551.3,698.9 542.1,706.2 545.5,702.2 551.6,697.5" fill="#3f7aa2" stroke="#000" stroke-width="0.4" stroke-linejoin="round" />
<polygon points="551.6,697.5 560.2,703.5 554.1,708.3 545.5,702.2" fill="#66ccff" stroke="#000" stroke-width="0.65" stroke-linejoin="round" />
<polygon points="575.9,686.9 589.0,695.9 569.8,711.0 556.8,701.9" fill="#346484" stroke="#000" stroke-width="0.65" stroke-linejoin="round" />
<polygon points="556.8,701.9 569.8,711.0 571.3,705.7 560.2,697.9" fill="#346484" stroke="#000" stroke-width="0.65" stroke-linejoin="round" />
<polygon points="589.0,695.9 569.8,711.0 571.3,705.7 587.2,693.1" fill="#2a5470" stroke="#000" stroke-width="0.65" stroke-linejoin="round" />
<polygon points="575.9,686.9 556.8,701.9 560.2,697.9 576.1,685.4" fill="#3f7aa2" stroke="#000" stroke-width="0.4" stroke-linejoin="round" />
<polygon points="576.1,685.4 587.2,693.1 571.3,705.7 560.2,697.9" fill="#66ccff" stroke="#000" stroke-width="0.65" stroke-linejoin="round" />
<polygon points="613.6,683.8 621.9,689.5 612.6,696.8 604.3,691.1" fill="#346484" stroke="#000" stroke-width="0.65" stroke-linejoin="round" />
<polygon points="604.3,691.1 612.6,696.8 614.0,691.5 607.8,687.2" fill="#346484" stroke="#000" stroke-width="0.65" stroke-linejoin="round" />
<polygon points="621.9,689.5 612.6,696.8 614.0,691.5 620.2,686.7" fill="#2a5470" stroke="#000" stroke-width="0.65" stroke-linejoin="round" />
<polygon points="613.6,683.8 604.3,691.1 607.8,687.2 613.9,682.4" fill="#3f7aa2" stroke="#000" stroke-width="0.4" stroke-linejoin="round" />
<polygon points="613.9,682.4 620.2,686.7 614.0,691.5 607.8,687.2" fill="#66ccff" stroke="#000" stroke-width="0.65" stroke-linejoin="round" />
<polygon points="622.8,690.0 631.1,695.7 621.7,703.1 613.4,697.4" fill="#346484" stroke="#000" stroke-width="0.65" stroke-linejoin="round" />
<polygon points="613.4,697.4 621.7,703.1 623.2,697.8 616.9,693.4" fill="#346484" stroke="#000" stroke-width="0.65" stroke-linejoin="round" />
<polygon points="631.1,695.7 621.7,703.1 623.2,697.8 629.3,693.0" fill="#2a5470" stroke="#000" stroke-width="0.65" stroke-linejoin="round" />
<polygon points="622.8,690.0 613.4,697.4 616.9,693.4 623.0,688.6" fill="#3f7aa2" stroke="#000" stroke-width="0.4" stroke-linejoin="round" />
<polygon points="623.0,688.6 629.3,693.0 623.2,697.8 616.9,693.4" fill="#66ccff" stroke="#000" stroke-width="0.65" stroke-linejoin="round" />
<polygon points="631.9,696.3 640.2,702.0 630.8,709.4 622.5,703.7" fill="#346484" stroke="#000" stroke-width="0.65" stroke-linejoin="round" />
<polygon points="622.5,703.7 630.8,709.4 632.3,704.1 626.0,699.7" fill="#346484" stroke="#000" stroke-width="0.65" stroke-linejoin="round" />
<polygon points="640.2,702.0 630.8,709.4 632.3,704.1 638.5,699.3" fill="#2a5470" stroke="#000" stroke-width="0.65" stroke-linejoin="round" />
<polygon points="631.9,696.3 622.5,703.7 626.0,699.7 632.1,694.9" fill="#3f7aa2" stroke="#000" stroke-width="0.4" stroke-linejoin="round" />
<polygon points="632.1,694.9 638.5,699.3 632.3,704.1 626.0,699.7" fill="#66ccff" stroke="#000" stroke-width="0.65" stroke-linejoin="round" />
<polygon points="641.1,702.6 649.4,708.4 640.0,715.7 631.7,710.0" fill="#346484" stroke="#000" stroke-width="0.65" stroke-linejoin="round" />
<polygon points="631.7,710.0 640.0,715.7 641.5,710.4 635.2,706.0" fill="#346484" stroke="#000" stroke-width="0.65" stroke-linejoin="round" />
<polygon points="649.4,708.4 640.0,715.7 641.5,710.4 647.7,705.6" fill="#2a5470" stroke="#000" stroke-width="0.65" stroke-linejoin="round" />
<polygon points="641.1,702.6 631.7,710.0 635.2,706.0 641.3,701.2" fill="#3f7aa2" stroke="#000" stroke-width="0.4" stroke-linejoin="round" />
<polygon points="641.3,701.2 647.7,705.6 641.5,710.4 635.2,706.0" fill="#66ccff" stroke="#000" stroke-width="0.65" stroke-linejoin="round" />
<polygon points="603.8,691.6 612.0,697.3 602.7,704.6 594.4,698.9" fill="#346484" stroke="#000" stroke-width="0.65" stroke-linejoin="round" />
<polygon points="594.4,698.9 602.7,704.6 604.1,699.3 597.9,694.9" fill="#346484" stroke="#000" stroke-width="0.65" stroke-linejoin="round" />
<polygon points="612.0,697.3 602.7,704.6 604.1,699.3 610.3,694.5" fill="#2a5470" stroke="#000" stroke-width="0.65" stroke-linejoin="round" />
<polygon points="603.8,691.6 594.4,698.9 597.9,694.9 604.0,690.2" fill="#3f7aa2" stroke="#000" stroke-width="0.4" stroke-linejoin="round" />
<polygon points="604.0,690.2 610.3,694.5 604.1,699.3 597.9,694.9" fill="#66ccff" stroke="#000" stroke-width="0.65" stroke-linejoin="round" />
<polygon points="612.8,697.8 621.1,703.5 611.8,710.9 603.5,705.2" fill="#346484" stroke="#000" stroke-width="0.65" stroke-linejoin="round" />
<polygon points="603.5,705.2 611.8,710.9 613.2,705.6 606.9,701.2" fill="#346484" stroke="#000" stroke-width="0.65" stroke-linejoin="round" />
<polygon points="621.1,703.5 611.8,710.9 613.2,705.6 619.4,700.8" fill="#2a5470" stroke="#000" stroke-width="0.65" stroke-linejoin="round" />
<polygon points="612.8,697.8 603.5,705.2 606.9,701.2 613.1,696.4" fill="#3f7aa2" stroke="#000" stroke-width="0.4" stroke-linejoin="round" />
<polygon points="613.1,696.4 619.4,700.8 613.2,705.6 606.9,701.2" fill="#66ccff" stroke="#000" stroke-width="0.65" stroke-linejoin="round" />
<polygon points="622.0,704.1 630.3,709.8 620.9,717.2 612.6,711.5" fill="#346484" stroke="#000" stroke-width="0.65" stroke-linejoin="round" />
<polygon points="612.6,711.5 620.9,717.2 622.4,711.9 616.1,707.5" fill="#346484" stroke="#000" stroke-width="0.65" stroke-linejoin="round" />
<polygon points="630.3,709.8 620.9,717.2 622.4,711.9 628.5,707.1" fill="#2a5470" stroke="#000" stroke-width="0.65" stroke-linejoin="round" />
<polygon points="622.0,704.1 612.6,711.5 616.1,707.5 622.2,702.7" fill="#3f7aa2" stroke="#000" stroke-width="0.4" stroke-linejoin="round" />
<polygon points="622.2,702.7 628.5,707.1 622.4,711.9 616.1,707.5" fill="#66ccff" stroke="#000" stroke-width="0.65" stroke-linejoin="round" />
<polygon points="631.1,710.4 639.5,716.2 630.1,723.5 621.7,717.8" fill="#346484" stroke="#000" stroke-width="0.65" stroke-linejoin="round" />
<polygon points="621.7,717.8 630.1,723.5 631.5,718.2 625.2,713.8" fill="#346484" stroke="#000" stroke-width="0.65" stroke-linejoin="round" />
<polygon points="639.5,716.2 630.1,723.5 631.5,718.2 637.7,713.4" fill="#2a5470" stroke="#000" stroke-width="0.65" stroke-linejoin="round" />
<polygon points="631.1,710.4 621.7,717.8 625.2,713.8 631.3,709.0" fill="#3f7aa2" stroke="#000" stroke-width="0.4" stroke-linejoin="round" />
<polygon points="631.3,709.0 637.7,713.4 631.5,718.2 625.2,713.8" fill="#66ccff" stroke="#000" stroke-width="0.65" stroke-linejoin="round" />
<polygon points="593.9,699.3 602.1,705.0 592.8,712.4 584.6,706.6" fill="#346484" stroke="#000" stroke-width="0.65" stroke-linejoin="round" />
<polygon points="584.6,706.6 592.8,712.4 594.2,707.0 588.0,702.7" fill="#346484" stroke="#000" stroke-width="0.65" stroke-linejoin="round" />
<polygon points="602.1,705.0 592.8,712.4 594.2,707.0 600.4,702.2" fill="#2a5470" stroke="#000" stroke-width="0.65" stroke-linejoin="round" />
<polygon points="593.9,699.3 584.6,706.6 588.0,702.7 594.1,697.9" fill="#3f7aa2" stroke="#000" stroke-width="0.4" stroke-linejoin="round" />
<polygon points="594.1,697.9 600.4,702.2 594.2,707.0 588.0,702.7" fill="#66ccff" stroke="#000" stroke-width="0.65" stroke-linejoin="round" />
<polygon points="602.9,705.6 611.2,711.3 601.8,718.7 593.6,712.9" fill="#346484" stroke="#000" stroke-width="0.65" stroke-linejoin="round" />
<polygon points="593.6,712.9 601.8,718.7 603.3,713.3 597.0,709.0" fill="#346484" stroke="#000" stroke-width="0.65" stroke-linejoin="round" />
<polygon points="611.2,711.3 601.8,718.7 603.3,713.3 609.4,708.5" fill="#2a5470" stroke="#000" stroke-width="0.65" stroke-linejoin="round" />
<polygon points="602.9,705.6 593.6,712.9 597.0,709.0 603.2,704.2" fill="#3f7aa2" stroke="#000" stroke-width="0.4" stroke-linejoin="round" />
<polygon points="603.2,704.2 609.4,708.5 603.3,713.3 597.0,709.0" fill="#66ccff" stroke="#000" stroke-width="0.65" stroke-linejoin="round" />
<polygon points="612.0,711.9 620.3,717.6 611.0,725.0 602.7,719.2" fill="#346484" stroke="#000" stroke-width="0.65" stroke-linejoin="round" />
<polygon points="602.7,719.2 611.0,725.0 612.4,719.7 606.1,715.3" fill="#346484" stroke="#000" stroke-width="0.65" stroke-linejoin="round" />
<polygon points="620.3,717.6 611.0,725.0 612.4,719.7 618.6,714.9" fill="#2a5470" stroke="#000" stroke-width="0.65" stroke-linejoin="round" />
<polygon points="612.0,711.9 602.7,719.2 606.1,715.3 612.3,710.5" fill="#3f7aa2" stroke="#000" stroke-width="0.4" stroke-linejoin="round" />
<polygon points="612.3,710.5 618.6,714.9 612.4,719.7 606.1,715.3" fill="#66ccff" stroke="#000" stroke-width="0.65" stroke-linejoin="round" />
<polygon points="621.2,718.2 629.5,724.0 620.1,731.4 611.8,725.6" fill="#346484" stroke="#000" stroke-width="0.65" stroke-linejoin="round" />
<polygon points="611.8,725.6 620.1,731.4 621.6,726.0 615.3,721.6" fill="#346484" stroke="#000" stroke-width="0.65" stroke-linejoin="round" />
<polygon points="629.5,724.0 620.1,731.4 621.6,726.0 627.7,721.2" fill="#2a5470" stroke="#000" stroke-width="0.65" stroke-linejoin="round" />
<polygon points="621.2,718.2 611.8,725.6 615.3,721.6 621.4,716.8" fill="#3f7aa2" stroke="#000" stroke-width="0.4" stroke-linejoin="round" />
<polygon points="621.4,716.8 627.7,721.2 621.6,726.0 615.3,721.6" fill="#66ccff" stroke="#000" stroke-width="0.65" stroke-linejoin="round" />
<polygon points="584.0,707.1 592.2,712.8 582.9,720.1 574.7,714.4" fill="#346484" stroke="#000" stroke-width="0.65" stroke-linejoin="round" />
<polygon points="574.7,714.4 582.9,720.1 584.4,714.8 578.1,710.4" fill="#346484" stroke="#000" stroke-width="0.65" stroke-linejoin="round" />
<polygon points="592.2,712.8 582.9,720.1 584.4,714.8 590.5,710.0" fill="#2a5470" stroke="#000" stroke-width="0.65" stroke-linejoin="round" />
<polygon points="584.0,707.1 574.7,714.4 578.1,710.4 584.2,705.7" fill="#3f7aa2" stroke="#000" stroke-width="0.4" stroke-linejoin="round" />
<polygon points="584.2,705.7 590.5,710.0 584.4,714.8 578.1,710.4" fill="#66ccff" stroke="#000" stroke-width="0.65" stroke-linejoin="round" />
<polygon points="593.0,713.4 601.3,719.1 591.9,726.4 583.7,720.7" fill="#346484" stroke="#000" stroke-width="0.65" stroke-linejoin="round" />
<polygon points="583.7,720.7 591.9,726.4 593.4,721.1 587.1,716.7" fill="#346484" stroke="#000" stroke-width="0.65" stroke-linejoin="round" />
<polygon points="601.3,719.1 591.9,726.4 593.4,721.1 599.5,716.3" fill="#2a5470" stroke="#000" stroke-width="0.65" stroke-linejoin="round" />
<polygon points="593.0,713.4 583.7,720.7 587.1,716.7 593.3,712.0" fill="#3f7aa2" stroke="#000" stroke-width="0.4" stroke-linejoin="round" />
<polygon points="593.3,712.0 599.5,716.3 593.4,721.1 587.1,716.7" fill="#66ccff" stroke="#000" stroke-width="0.65" stroke-linejoin="round" />
<polygon points="602.1,719.7 610.4,725.4 601.0,732.8 592.8,727.0" fill="#346484" stroke="#000" stroke-width="0.65" stroke-linejoin="round" />
<polygon points="592.8,727.0 601.0,732.8 602.5,727.5 596.2,723.1" fill="#346484" stroke="#000" stroke-width="0.65" stroke-linejoin="round" />
<polygon points="610.4,725.4 601.0,732.8 602.5,727.5 608.6,722.6" fill="#2a5470" stroke="#000" stroke-width="0.65" stroke-linejoin="round" />
<polygon points="602.1,719.7 592.8,727.0 596.2,723.1 602.3,718.3" fill="#3f7aa2" stroke="#000" stroke-width="0.4" stroke-linejoin="round" />
<polygon points="602.3,718.3 608.6,722.6 602.5,727.5 596.2,723.1" fill="#66ccff" stroke="#000" stroke-width="0.65" stroke-linejoin="round" />
<polygon points="611.2,726.0 619.5,731.8 610.1,739.2 601.8,733.4" fill="#346484" stroke="#000" stroke-width="0.65" stroke-linejoin="round" />
<polygon points="601.8,733.4 610.1,739.2 611.6,733.8 605.3,729.4" fill="#346484" stroke="#000" stroke-width="0.65" stroke-linejoin="round" />
<polygon points="619.5,731.8 610.1,739.2 611.6,733.8 617.8,729.0" fill="#2a5470" stroke="#000" stroke-width="0.65" stroke-linejoin="round" />
<polygon points="611.2,726.0 601.8,733.4 605.3,729.4 611.5,724.6" fill="#3f7aa2" stroke="#000" stroke-width="0.4" stroke-linejoin="round" />
<polygon points="611.5,724.6 617.8,729.0 611.6,733.8 605.3,729.4" fill="#66ccff" stroke="#000" stroke-width="0.65" stroke-linejoin="round" />
<polygon points="574.1,714.8 582.3,720.5 573.0,727.9 564.8,722.1" fill="#346484" stroke="#000" stroke-width="0.65" stroke-linejoin="round" />
<polygon points="564.8,722.1 573.0,727.9 574.5,722.6 568.3,718.2" fill="#346484" stroke="#000" stroke-width="0.65" stroke-linejoin="round" />
<polygon points="582.3,720.5 573.0,727.9 574.5,722.6 580.6,717.8" fill="#2a5470" stroke="#000" stroke-width="0.65" stroke-linejoin="round" />
<polygon points="574.1,714.8 564.8,722.1 568.3,718.2 574.3,713.4" fill="#3f7aa2" stroke="#000" stroke-width="0.4" stroke-linejoin="round" />
<polygon points="574.3,713.4 580.6,717.8 574.5,722.6 568.3,718.2" fill="#66ccff" stroke="#000" stroke-width="0.65" stroke-linejoin="round" />
<polygon points="583.2,721.1 591.4,726.9 582.0,734.2 573.8,728.4" fill="#346484" stroke="#000" stroke-width="0.65" stroke-linejoin="round" />
<polygon points="573.8,728.4 582.0,734.2 583.5,728.9 577.3,724.5" fill="#346484" stroke="#000" stroke-width="0.65" stroke-linejoin="round" />
<polygon points="591.4,726.9 582.0,734.2 583.5,728.9 589.6,724.1" fill="#2a5470" stroke="#000" stroke-width="0.65" stroke-linejoin="round" />
<polygon points="583.2,721.1 573.8,728.4 577.3,724.5 583.4,719.7" fill="#3f7aa2" stroke="#000" stroke-width="0.4" stroke-linejoin="round" />
<polygon points="583.4,719.7 589.6,724.1 583.5,728.9 577.3,724.5" fill="#66ccff" stroke="#000" stroke-width="0.65" stroke-linejoin="round" />
<polygon points="592.2,727.4 600.5,733.2 591.1,740.6 582.8,734.8" fill="#346484" stroke="#000" stroke-width="0.65" stroke-linejoin="round" />
<polygon points="582.8,734.8 591.1,740.6 592.6,735.2 586.3,730.8" fill="#346484" stroke="#000" stroke-width="0.65" stroke-linejoin="round" />
<polygon points="600.5,733.2 591.1,740.6 592.6,735.2 598.7,730.4" fill="#2a5470" stroke="#000" stroke-width="0.65" stroke-linejoin="round" />
<polygon points="592.2,727.4 582.8,734.8 586.3,730.8 592.4,726.0" fill="#3f7aa2" stroke="#000" stroke-width="0.4" stroke-linejoin="round" />
<polygon points="592.4,726.0 598.7,730.4 592.6,735.2 586.3,730.8" fill="#66ccff" stroke="#000" stroke-width="0.65" stroke-linejoin="round" />
<polygon points="601.3,733.8 609.6,739.6 600.2,747.0 591.9,741.1" fill="#346484" stroke="#000" stroke-width="0.65" stroke-linejoin="round" />
<polygon points="591.9,741.1 600.2,747.0 601.7,741.6 595.4,737.2" fill="#346484" stroke="#000" stroke-width="0.65" stroke-linejoin="round" />
<polygon points="609.6,739.6 600.2,747.0 601.7,741.6 607.8,736.8" fill="#2a5470" stroke="#000" stroke-width="0.65" stroke-linejoin="round" />
<polygon points="601.3,733.8 591.9,741.1 595.4,737.2 601.5,732.4" fill="#3f7aa2" stroke="#000" stroke-width="0.4" stroke-linejoin="round" />
<polygon points="601.5,732.4 607.8,736.8 601.7,741.6 595.4,737.2" fill="#66ccff" stroke="#000" stroke-width="0.65" stroke-linejoin="round" />
<polygon points="760.0,603.0 775.0,612.0 790.0,604.0 778.0,596.0" fill="#000" opacity="0.2" filter="url(#blur3)"/>
<polygon points="761.1,598.0 775.5,607.3 775.5,610.3 761.3,601.0" fill="#346484" stroke="#000" stroke-width="0.9" stroke-linejoin="round" />
<polygon points="775.5,607.3 788.0,598.8 787.8,601.8 775.5,610.3" fill="#1a2b38" stroke="#000" stroke-width="0.9" stroke-linejoin="round" />
<polygon points="761.1,598.0 773.0,589.4 788.0,598.8 775.5,607.3" fill="#66ccff" stroke="#000" stroke-width="0.9" stroke-linejoin="round" />
<polygon points="636.5,528.0 651.5,537.0 666.5,529.0 654.5,521.0" fill="#000" opacity="0.2" filter="url(#blur3)"/>
<polygon points="637.6,523.0 652.0,532.3 652.0,535.3 637.8,526.0" fill="#346484" stroke="#000" stroke-width="0.9" stroke-linejoin="round" />
<polygon points="652.0,532.3 664.5,523.8 664.3,526.8 652.0,535.3" fill="#1a2b38" stroke="#000" stroke-width="0.9" stroke-linejoin="round" />
<polygon points="637.6,523.0 649.5,514.4 664.5,523.8 652.0,532.3" fill="#66ccff" stroke="#000" stroke-width="0.9" stroke-linejoin="round" />
<linearGradient id="gO" gradientUnits="userSpaceOnUse" x1="1000" y1="660" x2="900" y2="830"><stop offset="0" stop-color="#66ccff"/><stop offset="1" stop-color="#7bdaff"/></linearGradient>
<polygon points="812.0,718.0 1018.0,856.0 1030.0,860.0 826.0,722.0" fill="#000" opacity="0.35" filter="url(#blur3)"/>
<polygon points="816.7,713.3 1021.0,847.7 1021.5,850.2 816.9,715.8" fill="#346484" stroke="#000" stroke-width="0.9" stroke-linejoin="round" />
<polygon points="1021.0,847.7 1097.5,767.3 1097.5,769.6 1021.5,850.2" fill="#346484" stroke="#000" stroke-width="0.9" stroke-linejoin="round" />
<polygon points="895.8,646.7 1097.5,767.3 1021.0,847.7 816.7,713.3" fill="url(#gO)" stroke="#000" stroke-width="1.0" stroke-linejoin="round" />
<polygon points="895.8,654.7 1087.5,769.2 1020.5,839.0 829.2,709.2" fill="none" stroke="#000" stroke-width="1.4" stroke-linejoin="round" />
<circle cx="896.7" cy="660.3" r="1.3" fill="#0b141b"/>
<circle cx="840.8" cy="710.0" r="1.3" fill="#0b141b"/>
<circle cx="992.0" cy="717.5" r="1.3" fill="#0b141b"/>
<circle cx="957.5" cy="783.8" r="1.3" fill="#0b141b"/>
<circle cx="1078.7" cy="770.0" r="1.3" fill="#0b141b"/>
<circle cx="1028.3" cy="829.6" r="1.0" fill="#0b141b"/>
<linearGradient id="gP" gradientUnits="userSpaceOnUse" x1="900" y1="800" x2="760" y2="930"><stop offset="0" stop-color="#66ccff"/><stop offset="1" stop-color="#7bdaff"/></linearGradient>
<polygon points="671.8,833.5 880.1,987.4 890.8,988.6 978.4,896.2 976.0,891.5 884.9,981.4 678.9,830.0" fill="#000" opacity="0.3" filter="url(#blur3)"/>
<polygon points="676.6,827.6 884.9,983.8 887.7,985.5 886.1,988.1 677.8,834.0" fill="#346484" stroke="#000" stroke-width="0.9" stroke-linejoin="round" />
<polyline points="677.0,830.0 885.4,986.2" fill="none" stroke="#8fe0ff" stroke-width="0.8" stroke-linejoin="round" stroke-linecap="round" />
<polygon points="884.9,983.8 974.8,890.3 974.8,896.2 887.7,986.2" fill="#2e5a78" stroke="#000" stroke-width="0.9" stroke-linejoin="round" />
<path d="M766.5,750.7 L974.8,890.3 L884.9,983.8 L676.6,827.6 Z M742.9,780.2 L890.8,880.8 L855.3,915.2 L823.3,895.0 L815.0,903.3 L719.2,834.2 L727.5,826.4 L706.2,810.3 Z M747.6,772.0 L757.1,764.9 L774.8,777.9 L766.5,785.0 Z M772.4,788.5 L780.7,782.6 L877.8,848.9 L869.5,856.0 Z M875.4,858.4 L883.7,851.3 L903.8,866.6 L895.5,874.9 Z M902.6,879.7 L910.9,872.6 L952.3,899.8 L944.1,908.1 Z M896.7,886.8 L938.1,914.0 L893.2,959.0 L851.7,929.4 Z " fill="url(#gP)" fill-rule="evenodd" stroke="#000" stroke-width="0.9" stroke-linejoin="round"/>
<clipPath id="hc0"><polygon points="742.9,780.2 890.8,880.8 855.3,915.2 823.3,895.0 815.0,903.3 719.2,834.2 727.5,826.4 706.2,810.3"/></clipPath>
<polyline points="706.2,810.3 742.9,780.2 890.8,880.8" fill="none" stroke="#000" stroke-opacity="0.28" stroke-width="13" filter="url(#blur3)" clip-path="url(#hc0)"/>
<polyline points="706.2,810.3 742.9,780.2 890.8,880.8" fill="none" stroke="#1a2b38" stroke-width="1.7" stroke-linejoin="round" stroke-linecap="round" />
<clipPath id="hc1"><polygon points="747.6,772.0 757.1,764.9 774.8,777.9 766.5,785.0"/></clipPath>
<polyline points="766.5,785.0 747.6,772.0 757.1,764.9" fill="none" stroke="#000" stroke-opacity="0.28" stroke-width="13" filter="url(#blur3)" clip-path="url(#hc1)"/>
<polyline points="766.5,785.0 747.6,772.0 757.1,764.9" fill="none" stroke="#1a2b38" stroke-width="1.7" stroke-linejoin="round" stroke-linecap="round" />
<clipPath id="hc2"><polygon points="772.4,788.5 780.7,782.6 877.8,848.9 869.5,856.0"/></clipPath>
<polyline points="869.5,856.0 772.4,788.5 780.7,782.6" fill="none" stroke="#000" stroke-opacity="0.28" stroke-width="13" filter="url(#blur3)" clip-path="url(#hc2)"/>
<polyline points="869.5,856.0 772.4,788.5 780.7,782.6" fill="none" stroke="#1a2b38" stroke-width="1.7" stroke-linejoin="round" stroke-linecap="round" />
<clipPath id="hc3"><polygon points="875.4,858.4 883.7,851.3 903.8,866.6 895.5,874.9"/></clipPath>
<polyline points="895.5,874.9 875.4,858.4 883.7,851.3" fill="none" stroke="#000" stroke-opacity="0.28" stroke-width="13" filter="url(#blur3)" clip-path="url(#hc3)"/>
<polyline points="895.5,874.9 875.4,858.4 883.7,851.3" fill="none" stroke="#1a2b38" stroke-width="1.7" stroke-linejoin="round" stroke-linecap="round" />
<clipPath id="hc4"><polygon points="902.6,879.7 910.9,872.6 952.3,899.8 944.1,908.1"/></clipPath>
<polyline points="944.1,908.1 902.6,879.7 910.9,872.6" fill="none" stroke="#000" stroke-opacity="0.28" stroke-width="13" filter="url(#blur3)" clip-path="url(#hc4)"/>
<polyline points="944.1,908.1 902.6,879.7 910.9,872.6" fill="none" stroke="#1a2b38" stroke-width="1.7" stroke-linejoin="round" stroke-linecap="round" />
<clipPath id="hc5"><polygon points="896.7,886.8 938.1,914.0 893.2,959.0 851.7,929.4"/></clipPath>
<polyline points="851.7,929.4 896.7,886.8 938.1,914.0" fill="none" stroke="#000" stroke-opacity="0.28" stroke-width="13" filter="url(#blur3)" clip-path="url(#hc5)"/>
<polyline points="851.7,929.4 896.7,886.8 938.1,914.0" fill="none" stroke="#1a2b38" stroke-width="1.7" stroke-linejoin="round" stroke-linecap="round" />
<polyline points="769.4,754.7 972.0,890.6" fill="none" stroke="#10202b" stroke-width="1.8" stroke-linejoin="round" stroke-linecap="round" />
<polyline points="758.2,761.8 964.2,895.0" fill="none" stroke="#000" stroke-width="0.7" stroke-linejoin="round" stroke-linecap="round" />
</svg>
<div id="topblack" class="abs"></div>
<div id="titlebar" class="abs"><div id="title" class="abs">pc-8801mk2sr_000*</div></div>
<div id="toolbar" class="abs"></div>
<div id="vstrip" class="abs"></div><div id="vblue" class="abs"></div>
<div id="premium" class="abs btn"><b>プレミアム版登録</b><span>(商業利用向け)</span></div>
<div id="signin" class="abs btn">サインイン</div>
<div id="help" class="abs">?</div>
<div id="navbar" class="abs"></div>
<div id="gridedit" class="abs">グリッドを編集</div>
<div class="abs snapbox" style="left:1741px">1</div>
<div class="abs snapbox" style="left:1821px">1</div>
<div class="abs snaplbl" style="left:1741px">長さスナップ</div>
<div class="abs snaplbl" style="left:1821px">角度スナップ</div>
<div id="taskbar" class="abs"></div><div id="search" class="abs"></div><div id="tbsel" class="abs"></div>
<div id="clock" class="abs" style="left:1821px;top:1053.5px;height:2.5px;overflow:hidden;color:#fff;font-size:12px;line-height:12px;white-space:nowrap;">9:31</div><div class="abs" style="left:1915px;top:1048px;width:1px;height:8px;background:#777"></div>
<div id="rstrip" class="abs"><i></i></div>
<svg id="ui" width="1928" height="1056" viewBox="0 0 1928 1056">
<polygon points="1.9,13 18.1,12.8 10,24.9" fill="#1b9ed6"/><polygon points="10,15.5 18.1,12.8 10,24.9" fill="#0d6d9a"/><polygon points="1.9,13 18.1,12.8 10,15.8" fill="#a9dcf1"/>
<g stroke="#111" stroke-width="1" fill="none"><line x1="1799" y1="18.5" x2="1809" y2="18.5"/><rect x="1844.5" y="15.5" width="7" height="7"/><polyline points="1846.5,15.5 1846.5,13.5 1853.5,13.5 1853.5,20.5 1851.5,20.5"/><path d="M1889.8,13.3 L1899.8,23.3 M1899.8,13.3 L1889.8,23.3" stroke-width="1.1"/></g>
<defs><linearGradient id="lg" x1="0" y1="0" x2="1" y2="1"><stop offset="0" stop-color="#c2d2da"/><stop offset="1" stop-color="#9db7c4"/></linearGradient><clipPath id="lc"><rect x="7.8" y="39.3" width="43.5" height="43" rx="7.5"/></clipPath></defs>
<rect x="7.8" y="39.3" width="43.5" height="43" rx="7.5" fill="url(#lg)"/>
<g clip-path="url(#lc)"><polygon points="46.5,50.3 52,55.5 52,83 36,83 30,76.1" fill="#6e9cb1"/></g>
<polygon points="13.1,50.3 30,56.2 30,76.1" fill="#1b9ed6"/><polygon points="46.5,50.3 30,56.2 30,76.1" fill="#0c6c97"/><polygon points="13.1,50.3 46.5,50.3 30,56.2" fill="#bfe5f4"/>
<text x="64.3" y="58.4" font-family="Liberation Sans, sans-serif" font-size="12.9" fill="#6a6a6a" textLength="64" lengthAdjust="spacingAndGlyphs">AUTODESK</text><text x="128.6" y="53" font-family="Liberation Sans, sans-serif" font-size="5" fill="#6a6a6a">®</text>
<text x="64.3" y="73.7" font-family="Liberation Sans, sans-serif" font-size="13.2" font-weight="bold" fill="#555"><tspan textLength="34" lengthAdjust="spacingAndGlyphs">123D</tspan></text><text x="99.5" y="68" font-family="Liberation Sans, sans-serif" font-size="4.5" fill="#555">®</text><text x="107.5" y="73.7" font-family="Liberation Sans, sans-serif" font-size="13.2" font-weight="bold" fill="#555" textLength="52.5" lengthAdjust="spacingAndGlyphs">DESIGN</text>
<polyline points="198.3,62.8 205,66.7 211.7,62.8" fill="none" stroke="#222" stroke-width="1.7"/>
<polygon points="615,58.3 623.8,52.9 623.8,63.4" fill="#222"/><path d="M623,58.2 Q632.5,57.2 635.3,62" fill="none" stroke="#222" stroke-width="2.3"/>
<polygon points="677.5,58.3 669,53.2 669,63.3" fill="#b8b8b8"/><path d="M669.8,58.2 Q661,57.2 657.8,62" fill="none" stroke="#b8b8b8" stroke-width="2.3"/>
<line x1="710.5" y1="47" x2="710.5" y2="72" stroke="#a8a8a8" stroke-width="1"/>
<path d="M755,49.3 L744.3,49.3 L744.3,69.6 L764.8,69.6 L764.8,57.5" fill="none" stroke="#222" stroke-width="1" stroke-dasharray="1 1.2"/>
<polygon points="747.4,57.4 753.2,60.3 753.2,67.5 747.4,64.6" fill="#6c6c6c"/><polygon points="753.2,60.3 759.0,57.4 759.0,64.6 753.2,67.5" fill="#2a2a2a"/><polygon points="747.4,57.4 753.2,54.5 759.0,57.4 753.2,60.3" fill="#ffffff" stroke="#333" stroke-width="0.7"/>
<g stroke="#222" stroke-width="0.9" fill="#222"><line x1="757.3" y1="50.7" x2="765.7" y2="50.7"/><line x1="761.5" y1="46.5" x2="761.5" y2="54.9"/><polygon points="757,50.7 758.6,49.5 758.6,51.9" stroke="none"/><polygon points="766,50.7 764.4,49.5 764.4,51.9" stroke="none"/><polygon points="761.5,46.2 760.3,47.8 762.7,47.8" stroke="none"/><polygon points="761.5,55.2 760.3,53.6 762.7,53.6" stroke="none"/></g>
<polygon points="771.9,82.9 774.8,80 774.8,82.9" fill="#9a9a9a"/>
<line x1="796.3" y1="47" x2="796.3" y2="72" stroke="#a8a8a8" stroke-width="1"/>
<circle cx="844.2" cy="54.4" r="7.3" fill="#fff" stroke="#333" stroke-width="0.9"/>
<polygon points="829.6,55.6 837.6,59.8 837.6,69.8 829.6,65.6" fill="#6c6c6c"/><polygon points="837.6,59.8 845.6,55.6 845.6,65.6 837.6,69.8" fill="#2a2a2a"/><polygon points="829.6,55.6 837.6,51.4 845.6,55.6 837.6,59.8" fill="#ffffff" stroke="#333" stroke-width="0.7"/>
<polygon points="857.6,82.9 860.5,80 860.5,82.9" fill="#9a9a9a"/>
<path d="M875.3,51.5 C871.5,56 873,64.5 879,65 C884,65.5 885,61 884,58" fill="none" stroke="#222" stroke-width="1.1"/><circle cx="882.8" cy="52.3" r="1.7" fill="#222"/><circle cx="876.8" cy="63" r="1.7" fill="#222"/>
<polygon points="892.2,47.8 896,51.5 887,62.3 882.6,64.8 883.5,60" fill="#222"/><polygon points="882.6,64.8 883.2,62 885,63.6" fill="#fff"/>
<polygon points="900.6,82.9 903.5,80 903.5,82.9" fill="#9a9a9a"/>
<polygon points="918.0,56.0 926.0,60.2 926.0,70.2 918.0,66.0" fill="#6c6c6c"/><polygon points="926.0,60.2 934.0,56.0 934.0,66.0 926.0,70.2" fill="#2a2a2a"/><polygon points="918.0,56.0 926.0,51.8 934.0,56.0 926.0,60.2" fill="#ffffff" stroke="#333" stroke-width="0.7"/>
<polygon points="933.5,45.5 935.6,47.2 929,55.8 926.8,57 927.2,54.5" fill="#222"/>
<polygon points="943.6,82.9 946.5,80 946.5,82.9" fill="#9a9a9a"/>
<polygon points="958.0,57.5 965.6,61.5 965.6,71.0 958.0,67.0" fill="#6c6c6c"/><polygon points="965.6,61.5 973.2,57.5 973.2,67.0 965.6,71.0" fill="#2a2a2a"/><polygon points="958.0,57.5 965.6,53.5 973.2,57.5 965.6,61.5" fill="#ffffff" stroke="#333" stroke-width="0.7"/>
<g stroke="#222" stroke-width="1" fill="#222"><polyline points="974.3,47.5 974.3,55.3 981.5,55.3" fill="none"/><polygon points="974.3,46 972.9,48.5 975.7,48.5" stroke="none"/><polygon points="983,55.3 980.5,53.9 980.5,56.7" stroke="none"/></g>
<polygon points="986.6,82.9 989.5,80 989.5,82.9" fill="#9a9a9a"/>
<polygon points="1002.9,52.0 1006.8,54.0 1006.8,58.4 1002.9,56.4" fill="#6c6c6c"/><polygon points="1006.8,54.0 1010.7,52.0 1010.7,56.4 1006.8,58.4" fill="#2a2a2a"/><polygon points="1002.9,52.0 1006.8,50.0 1010.7,52.0 1006.8,54.0" fill="#ffffff" stroke="#333" stroke-width="0.7"/>
<polygon points="1013.1,52.0 1017.0,54.0 1017.0,58.4 1013.1,56.4" fill="#6c6c6c"/><polygon points="1017.0,54.0 1020.9,52.0 1020.9,56.4 1017.0,58.4" fill="#2a2a2a"/><polygon points="1013.1,52.0 1017.0,50.0 1020.9,52.0 1017.0,54.0" fill="#ffffff" stroke="#333" stroke-width="0.7"/>
<polygon points="1002.9,61.6 1006.8,63.6 1006.8,68.0 1002.9,66.0" fill="#6c6c6c"/><polygon points="1006.8,63.6 1010.7,61.6 1010.7,66.0 1006.8,68.0" fill="#2a2a2a"/><polygon points="1002.9,61.6 1006.8,59.6 1010.7,61.6 1006.8,63.6" fill="#ffffff" stroke="#333" stroke-width="0.7"/>
<polygon points="1013.1,61.6 1017.0,63.6 1017.0,68.0 1013.1,66.0" fill="#6c6c6c"/><polygon points="1017.0,63.6 1020.9,61.6 1020.9,66.0 1017.0,68.0" fill="#2a2a2a"/><polygon points="1013.1,61.6 1017.0,59.6 1020.9,61.6 1017.0,63.6" fill="#ffffff" stroke="#333" stroke-width="0.7"/>
<polygon points="1029.6,82.9 1032.5,80 1032.5,82.9" fill="#9a9a9a"/>
<circle cx="1059.3" cy="55.5" r="5.6" fill="#fff" stroke="#333" stroke-width="0.9"/>
<polygon points="1046.9,58.3 1052.5,61.2 1052.5,68.4 1046.9,65.5" fill="#6c6c6c"/><polygon points="1052.5,61.2 1058.1,58.3 1058.1,65.5 1052.5,68.4" fill="#2a2a2a"/><polygon points="1046.9,58.3 1052.5,55.4 1058.1,58.3 1052.5,61.2" fill="#ffffff" stroke="#333" stroke-width="0.7"/>
<rect x="1044.7" y="48.6" width="1.4" height="1.4" fill="#222"/>
<rect x="1065.6" y="48.6" width="1.4" height="1.4" fill="#222"/>
<rect x="1044.7" y="69.1" width="1.4" height="1.4" fill="#222"/>
<rect x="1065.6" y="69.1" width="1.4" height="1.4" fill="#222"/>
<polygon points="1072.6,82.9 1075.5,80 1075.5,82.9" fill="#9a9a9a"/>
<polygon points="1089.2,56.3 1099,52 1109,55.5 1109,64.5 1098.5,69.5 1089.2,65.5" fill="#2a2a2a"/>
<polygon points="1089.2,56.3 1098.5,60.3 1098.5,69.5 1089.2,65.5" fill="#6c6c6c"/>
<polygon points="1089.2,56.3 1099,52 1109,55.5 1098.5,60.3" fill="#fff" stroke="#333" stroke-width="0.7"/><line x1="1103" y1="53.5" x2="1094" y2="58.3" stroke="#333" stroke-width="0.7"/>
<polygon points="1115.6,82.9 1118.5,80 1118.5,82.9" fill="#9a9a9a"/>
<polygon points="1131.0,54.6 1139.0,58.8 1139.0,69.3 1131.0,65.1" fill="#6c6c6c"/><polygon points="1139.0,58.8 1147.0,54.6 1147.0,65.1 1139.0,69.3" fill="#2a2a2a"/><polygon points="1131.0,54.6 1139.0,50.4 1147.0,54.6 1139.0,58.8" fill="#ffffff" stroke="#333" stroke-width="0.7"/>
<rect x="1146.3" y="49.3" width="4.6" height="20" fill="#fff" stroke="#222" stroke-width="0.9"/><path d="M1148.6,52 h2.3 M1148.6,54.5 h2.3 M1148.6,57 h2.3 M1148.6,59.5 h2.3 M1148.6,62 h2.3 M1148.6,64.5 h2.3 M1148.6,67 h2.3" stroke="#222" stroke-width="0.6"/>
<path d="M1175.5,51.3 H1193.2 V56.6 H1188.6 V69.5 H1180.2 V56.6 H1175.5 Z" fill="#222"/>
<g transform="translate(1226.5,58.5) rotate(45) scale(1.25)"><path d="M-7,8 V-1 A7,7 0 0 1 7,-1 V8 H3.2 V-1 A3.2,3.2 0 0 0 -3.2,-1 V8 Z" fill="#fff" stroke="#222" stroke-width="1"/><rect x="-7" y="4.6" width="3.8" height="3.4" fill="#222"/><rect x="3.2" y="4.6" width="3.8" height="3.4" fill="#222"/></g>
<line x1="1269.5" y1="47" x2="1269.5" y2="72" stroke="#a8a8a8" stroke-width="1"/>
<polygon points="1303,54.3 1313.5,49.8 1323.8,54.3 1323.8,65 1313,69.6 1303,65.5" fill="#fff" stroke="#333" stroke-width="0.8"/>
<path d="M1303,57 L1313,61.3 M1303,59.6 L1313,63.9 M1303,62.2 L1313,66.5 M1303,64.8 L1313,69.1" stroke="#222" stroke-width="1.3"/>
<path d="M1313,63 L1321,56 M1313,66 L1323.8,56.8 M1313,69 L1323.8,59.8 M1316.5,68.2 L1323.8,62.3 M1320,66.7 L1323.8,64" stroke="#222" stroke-width="1.1"/>
<polygon points="1303,54.3 1313.5,49.8 1323.8,54.3 1313,58.8" fill="#fff" stroke="#333" stroke-width="0.8"/><ellipse cx="1862" cy="178" rx="30" ry="14" fill="#000" opacity="0.13" filter="url(#vb)"/>
<defs><filter id="vb" x="-50%" y="-50%" width="200%" height="200%"><feGaussianBlur stdDeviation="5"/></filter><linearGradient id="vl" x1="0" y1="0" x2="0.6" y2="1"><stop offset="0" stop-color="#dedede"/><stop offset="1" stop-color="#f4f4f4"/></linearGradient><linearGradient id="vr" x1="0" y1="0" x2="0.3" y2="1"><stop offset="0" stop-color="#f2f2f2"/><stop offset="1" stop-color="#dcdcdc"/></linearGradient></defs>
<polygon points="1821.4,128.8 1861.2,151.7 1861.7,186 1825.9,162.7" fill="url(#vl)"/>
<polygon points="1861.2,151.7 1893.1,123.9 1889.6,158.7 1861.7,186" fill="url(#vr)"/>
<polygon points="1854.8,105.9 1893.1,123.9 1861.2,151.7 1821.4,128.8" fill="#f1f1f1"/>
<path d="M1854.8,105.9 L1893.1,123.9 L1861.2,151.7 L1821.4,128.8 Z M1821.4,128.8 L1825.9,162.7 L1861.7,186 L1889.6,158.7 L1893.1,123.9 M1861.2,151.7 L1861.7,186" fill="none" stroke="#9a9a9a" stroke-width="0.7" stroke-dasharray="3 1.6"/>
<polygon points="1854.3,147.6 1861.3,141.8 1868.3,146.6 1867.8,153 1861.4,158.3 1854.5,154" fill="#b3e1f2"/>
<path d="M1854.3,147.6 L1861.2,151.7 L1868.3,146.6 M1861.2,151.7 L1861.4,158.3" fill="none" stroke="#a5c9d6" stroke-width="0.6"/>
<text transform="matrix(1.2,-0.88,1.15,0.52,1866.3,130.5)" font-family="Liberation Sans, Noto Sans CJK JP, sans-serif" font-weight="400" fill="#111" text-anchor="middle" font-size="19">上</text>
<text transform="matrix(1.05,0.6,0.06,1.05,1843.8,165.5)" font-family="Liberation Sans, Noto Sans CJK JP, sans-serif" font-weight="400" fill="#111" text-anchor="middle" font-size="19">左</text>
<text transform="matrix(0.85,-0.74,0,0.9,1877.2,161.5)" font-family="Liberation Sans, Noto Sans CJK JP, sans-serif" font-weight="400" fill="#111" text-anchor="middle" font-size="19">前</text>
<g stroke="#222" stroke-width="1" fill="#222"><line x1="1862.2" y1="231.4" x2="1880.2" y2="231.4"/><line x1="1871.2" y1="222.4" x2="1871.2" y2="240.4"/>
<polygon points="1860.7,231.4 1863.7,229.4 1863.7,233.4" stroke="none"/>
<polygon points="1881.7,231.4 1878.7,229.4 1878.7,233.4" stroke="none"/>
<polygon points="1871.2,220.9 1869.2,223.9 1873.2,223.9" stroke="none"/>
<polygon points="1871.2,241.9 1869.2,238.9 1873.2,238.9" stroke="none"/></g>
<polygon points="1866.0,263.6 1871.2,266.3 1871.2,272.8 1866.0,270.1" fill="#6c6c6c"/><polygon points="1871.2,266.3 1876.4,263.6 1876.4,270.1 1871.2,272.8" fill="#2a2a2a"/><polygon points="1866.0,263.6 1871.2,260.9 1876.4,263.6 1871.2,266.3" fill="#ffffff" stroke="#333" stroke-width="0.7"/>
<path d="M1863.7,259.3 A10.5,10.5 0 0 0 1866.7,275.3" fill="none" stroke="#222" stroke-width="1.1"/>
<path d="M1872.7,255.6 A10.5,10.5 0 0 1 1880.2,271.3" fill="none" stroke="#222" stroke-width="1.1"/>
<polygon points="1869.7,276.6 1865.4,277.3 1866.6,273.1" fill="#222"/>
<polygon points="1869.7,254.8 1874.0,253.8 1873.2,258.0" fill="#222"/>
<circle cx="1868.3" cy="298.5" r="6.6" fill="#fff" stroke="#222" stroke-width="1.4"/><line x1="1873.5" y1="303.7" x2="1878" y2="308.2" stroke="#222" stroke-width="3.6"/>
<line x1="1859" y1="322.5" x2="1883" y2="322.5" stroke="#999" stroke-width="1"/>
<polygon points="1866.0,342.8 1871.2,345.5 1871.2,352.0 1866.0,349.3" fill="#6c6c6c"/><polygon points="1871.2,345.5 1876.4,342.8 1876.4,349.3 1871.2,352.0" fill="#2a2a2a"/><polygon points="1866.0,342.8 1871.2,340.1 1876.4,342.8 1871.2,345.5" fill="#ffffff" stroke="#333" stroke-width="0.7"/>
<path d="M1861.4,338.8 v-3.5 h3.5 M1877.5,335.3 h3.5 v3.5 M1861.4,351.2 v3.5 h3.5 M1877.5,354.7 h3.5 v-3.5" fill="none" stroke="#222" stroke-width="1.1"/>
<circle cx="1875.7" cy="375.7" r="6" fill="#fff" stroke="#333" stroke-width="0.8"/>
<polygon points="1862.2,377.9 1869.2,381.5 1869.2,389.5 1862.2,385.9" fill="#6c6c6c"/><polygon points="1869.2,381.5 1876.2,377.9 1876.2,385.9 1869.2,389.5" fill="#2a2a2a"/><polygon points="1862.2,377.9 1869.2,374.3 1876.2,377.9 1869.2,381.5" fill="#bbb" stroke="#333" stroke-width="0.7"/>
<path d="M1860.7,415.0 Q1871.2,405.5 1881.7,415.0 Q1871.2,424.5 1860.7,415.0 Z" fill="#fff" stroke="#222" stroke-width="1.2"/><circle cx="1871.2" cy="415.0" r="3.7" fill="#555"/>
<g stroke="#222" stroke-width="1" fill="none"><path d="M1863.2,444.0 L1876.2,444.0 L1881.7,457.5 L1860.7,457.5 Z"/>
<path d="M1867.5,444.0 L1867.7,457.5 M1871.9,444.0 L1874.7,457.5 M1862.4,448.5 L1878.0,448.5 M1861.6,453.0 L1879.9,453.0"/></g>
<path d="M1867.7,445.0 Q1874.7,439.0 1881.7,445.0 Q1874.7,451.0 1867.7,445.0 Z" fill="#fff" stroke="#222" stroke-width="0.9"/><circle cx="1874.7" cy="445.0" r="2.4" fill="#555"/>
<path d="M1861.2,479.3 h5 l1.5,-2.5 h7 l1.5,2.5 h5 v14 h-20 Z" fill="#333"/><circle cx="1871.2" cy="486.8" r="4.4" fill="none" stroke="#fff" stroke-width="1.8"/><rect x="1877.5" y="481.5" width="2" height="1.6" fill="#fff"/>
<line x1="1859" y1="506.6" x2="1883" y2="506.6" stroke="#999" stroke-width="1"/>
<polygon points="1861.2,529.5 1868.2,525.5 1878.7,530.0 1878.7,537.0 1869.7,542.0 1861.2,537.5" fill="#2a2a2a"/>
<polygon points="1861.2,529.5 1869.7,534.0 1869.7,542.0 1861.2,537.5" fill="#6c6c6c"/>
<polygon points="1861.2,529.5 1868.2,525.5 1878.7,530.0 1869.7,534.0" fill="#fff" stroke="#333" stroke-width="0.7"/><line x1="1873.7" y1="527.8" x2="1865.2" y2="531.7" stroke="#333" stroke-width="0.7"/>
<g transform="translate(1876.7,523.0) rotate(40) scale(0.62)"><path d="M-7,8 V-1 A7,7 0 0 1 7,-1 V8 H3.2 V-1 A3.2,3.2 0 0 0 -3.2,-1 V8 Z" fill="#fff" stroke="#222" stroke-width="1.4"/><rect x="-7" y="4.6" width="3.8" height="3.4" fill="#222"/><rect x="3.2" y="4.6" width="3.8" height="3.4" fill="#222"/></g>
<rect x="1860.7" y="523.0" width="1.4" height="1.4" fill="#222"/>
<rect x="1860.7" y="541.0" width="1.4" height="1.4" fill="#222"/>
<rect x="1881.2" y="541.0" width="1.4" height="1.4" fill="#222"/>
<g transform="translate(1872.7,570.0) rotate(-140) scale(0.95)"><path d="M-7,8 V-1 A7,7 0 0 1 7,-1 V8 H3.2 V-1 A3.2,3.2 0 0 0 -3.2,-1 V8 Z" fill="#fff" stroke="#222" stroke-width="1.1"/><rect x="-7" y="4.2" width="3.8" height="3.8" fill="#222"/><rect x="3.2" y="4.2" width="3.8" height="3.8" fill="#222"/></g>
<polygon points="1860.6,563.0 1863.2,564.3 1863.2,567.3 1860.6,566.0" fill="#6c6c6c"/><polygon points="1863.2,564.3 1865.8,563.0 1865.8,566.0 1863.2,567.3" fill="#2a2a2a"/><polygon points="1860.6,563.0 1863.2,561.7 1865.8,563.0 1863.2,564.3" fill="#ffffff" stroke="#333" stroke-width="0.7"/>
<path d="M1861.7,568.0 Q1862.2,579.0 1880.7,578.8" fill="none" stroke="#222" stroke-width="1" stroke-dasharray="1 1"/>
<line x1="1863.2" y1="579.5" x2="1881.2" y2="559.5" stroke="#222" stroke-width="1.5"/>
<polygon points="1913.3,588.5 1918.5,583.5 1918.5,593.5" fill="#fff"/>
</svg>
</body></html>
